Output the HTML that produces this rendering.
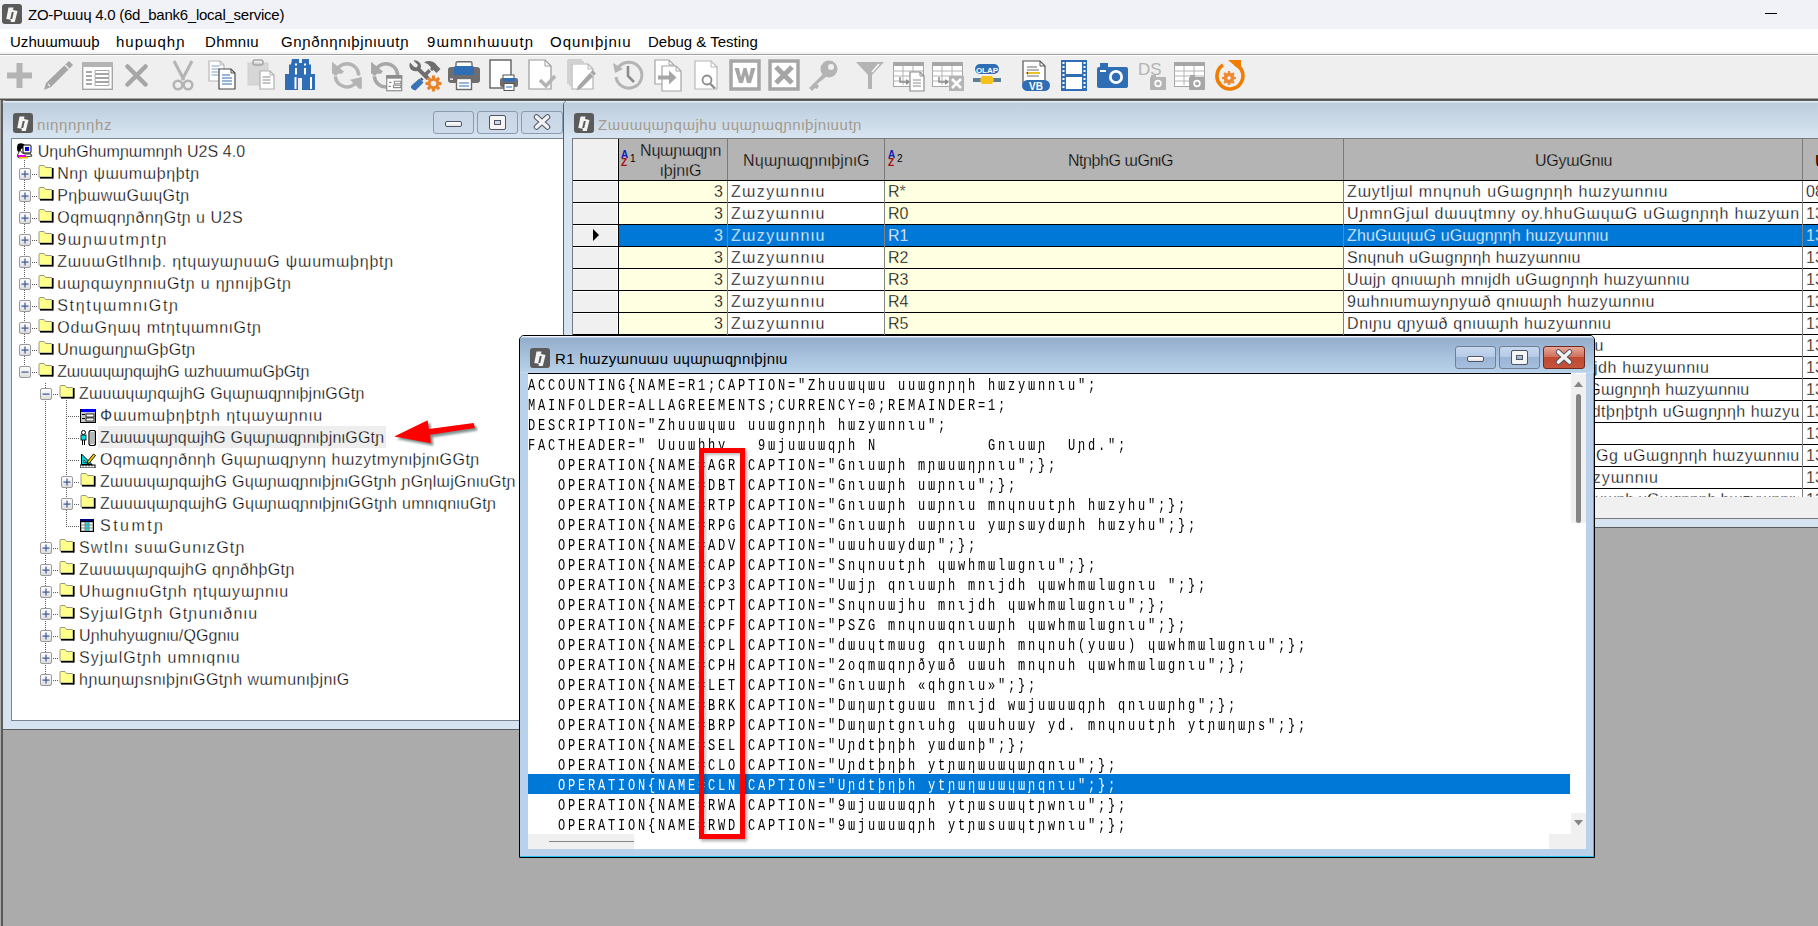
<!DOCTYPE html><html><head><meta charset="utf-8"><style>
*{margin:0;padding:0;box-sizing:border-box}
html,body{width:1818px;height:926px;overflow:hidden;background:#ababab;font-family:"Liberation Sans",sans-serif;color:#000}
.ab{position:absolute}
.tx{position:absolute;white-space:nowrap;line-height:1}
#title{left:0;top:0;width:1818px;height:29px;background:#f0f2f8}
#menu{left:0;top:29px;width:1818px;height:27px;background:linear-gradient(#fff 0 23px,#f2f2f2 23px 25px,#a0a0a0 25px 26px,#fff 26px 27px)}
#tb{left:0;top:56px;width:1818px;height:42px;background:#efefef}
#tbl{left:0;top:98px;width:1818px;height:2px;background:linear-gradient(#a6a6a6 0 1px,#4f4f4f 1px 2px)}
.mi{position:absolute;top:33px;font-size:15px;white-space:nowrap;line-height:17px}
.win{position:absolute;border:1px solid #5b5b5b}
.ttl{position:absolute;font-size:15px;white-space:nowrap;line-height:17px}
.tree{font-size:15px}
.tr{position:absolute;white-space:nowrap;font-size:16px;line-height:18px}
.grid td{}
.code{position:absolute;font-family:"Liberation Mono",monospace;font-size:16px;letter-spacing:3.7333px;white-space:pre;line-height:20px;transform:scaleX(0.75);transform-origin:0 0}
</style></head><body>
<div class="ab" id="title"></div>
<div class="tx" style="left:28px;top:7px;font-size:15px;color:#000;letter-spacing:-0.25px">ZO-Pɯuɥ 4.0 (6d_bank6_local_service)</div>
<div class="ab" style="left:1765px;top:13px;width:12px;height:1px;background:#000"></div>
<div class="ab" id="menu"></div>
<div class="mi" style="left:10px;letter-spacing:0.037px">Uzhuɯmɯuþ</div>
<div class="mi" style="left:116px;letter-spacing:0.990px">hupɯqhɲ</div>
<div class="mi" style="left:205px;letter-spacing:0.362px">Dhmnιu</div>
<div class="mi" style="left:281px;letter-spacing:0.659px">Gnɲðnηnιþjnιuutɲ</div>
<div class="mi" style="left:427px;letter-spacing:1.094px">9ɯmnιhɯuutɲ</div>
<div class="mi" style="left:550px;letter-spacing:0.976px">Oqunιþjnιu</div>
<div class="mi" style="left:648px">Debug &amp; Testing</div>
<div class="ab" id="tb"></div>
<div class="ab" id="tbl"></div>
<svg class="ab" style="left:6px;top:62px" width="27" height="27" viewBox="0 0 27 27"><path d="M13.5 1 V26 M1 13.5 H26" stroke="#b4b4b4" stroke-width="6"/></svg>
<svg class="ab" style="left:42px;top:59px" width="33" height="33" viewBox="0 0 33 33"><path d="M27 2 L31 6 L9 28 L2 31 L4 24 Z" fill="#a6a6a6"/><path d="M23 6 L27 10" stroke="#f0f0f0" stroke-width="1.5"/><path d="M6 25 L8 27" stroke="#f0f0f0" stroke-width="1.2"/></svg>
<svg class="ab" style="left:82px;top:62px" width="31" height="28" viewBox="0 0 31 28"><rect x="0.7" y="0.7" width="29.6" height="26.6" fill="#fff" stroke="#a6a6a6" stroke-width="1.4"/><rect x="0" y="0" width="31" height="5" fill="#b4b4b4"/><path d="M4 10h6M4 14h6M4 18h6M4 22h6" stroke="#8c8c8c" stroke-width="1.3"/><path d="M13 8.5h14v3h-14zM13 12.5h14v3h-14zM13 16.5h14v3h-14zM13 20.5h14v3h-14z" fill="none" stroke="#a6a6a6" stroke-width="1"/></svg>
<svg class="ab" style="left:125px;top:64px" width="23" height="23" viewBox="0 0 23 23"><path d="M2.5 2.5 L20.5 20.5 M20.5 2.5 L2.5 20.5" stroke="#a6a6a6" stroke-width="4.5" stroke-linecap="round"/></svg>
<svg class="ab" style="left:172px;top:60px" width="22" height="31" viewBox="0 0 22 31"><path d="M2 1 L12 20 M20 1 L10 20" stroke="#b4b4b4" stroke-width="3"/><circle cx="6" cy="25" r="4.3" fill="none" stroke="#b4b4b4" stroke-width="2.6"/><circle cx="16" cy="25" r="4.3" fill="none" stroke="#b4b4b4" stroke-width="2.6"/></svg>
<svg class="ab" style="left:208px;top:60px" width="29" height="31" viewBox="0 0 29 31"><path d="M1 1 h11 l4 4 v16 h-15 z" fill="#fff" stroke="#b8b8b8" stroke-width="1.2"/><path d="M12 1 v4 h4" fill="none" stroke="#b8b8b8" stroke-width="1"/><path d="M3.5 6h8M3.5 9h8M3.5 12h8M3.5 15h8" stroke="#7fa3cf" stroke-width="1"/><path d="M11 9 h12 l4 4 v16 h-16 z" fill="#fff" stroke="#4a4a4a" stroke-width="1.2"/><path d="M23 9 v4 h4" fill="none" stroke="#4a4a4a" stroke-width="1"/><path d="M14 15h8M14 18h10M14 21h10M14 24h10" stroke="#2f6db5" stroke-width="1.2"/></svg>
<svg class="ab" style="left:247px;top:59px" width="29" height="32" viewBox="0 0 29 32"><rect x="1" y="4" width="20" height="22" fill="#d6d6d6" stroke="#cfcfcf"/><rect x="6" y="1" width="10" height="5" rx="2" fill="none" stroke="#a6a6a6" stroke-width="1.5"/><path d="M13 12 h10 l4 4 v14 h-14 z" fill="#fff" stroke="#b0b0b0" stroke-width="1.2"/><path d="M23 12 v4 h4" fill="none" stroke="#b0b0b0" stroke-width="1"/><path d="M15.5 18h8M15.5 21h8M15.5 24h8" stroke="#8c8c8c" stroke-width="1"/></svg>
<svg class="ab" style="left:285px;top:59px" width="31" height="32" viewBox="0 0 31 32"><path d="M7 0 h7 v4 h3 v-4 h7 v5.5 h2 v9.5 h4 v16 h-13 v-12 h-4 v12 h-13 v-16 h4 v-9.5 h2 z" fill="#2f6db5"/><rect x="10" y="4.5" width="2" height="2" fill="#fff"/><rect x="10" y="9" width="2" height="6.5" fill="#fff"/><rect x="9.5" y="18" width="2" height="12" fill="#fff"/><rect x="19" y="4.5" width="2" height="2" fill="#fff"/><rect x="19" y="9" width="2" height="6.5" fill="#fff"/><rect x="25" y="18" width="2" height="12" fill="#fff"/></svg>
<svg class="ab" style="left:332px;top:61px" width="31" height="30" viewBox="0 0 31 30"><path d="M3.3 14.4 A11.7 11.7 0 0 1 26.7 14.4" fill="none" stroke="#b4b4b4" stroke-width="3.5"/><path d="M0 0.7 L0 12.8 L9.7 12.8 L12 10.4 Z" fill="#b4b4b4"/><path d="M3.3 15.4 A11.7 11.7 0 0 0 24 21.5" fill="none" stroke="#b4b4b4" stroke-width="3.5"/><path d="M18 18.8 L29.8 16.1 L29.8 27.8 L27 27.8 Z" fill="#b4b4b4"/></svg>
<svg class="ab" style="left:371px;top:61px" width="32" height="31" viewBox="0 0 32 31"><path d="M3.3 14.4 A11.7 11.7 0 0 1 26.7 14.4" fill="none" stroke="#a8a8a8" stroke-width="3.5"/><path d="M0 0.7 L0 12.8 L9.7 12.8 L12 10.4 Z" fill="#a8a8a8"/><path d="M3.3 15.4 A11.7 11.7 0 0 0 16 26" fill="none" stroke="#a6a6a6" stroke-width="3.5"/><path d="M26.7 14.4 L26.7 15" stroke="#a6a6a6" stroke-width="3.5"/><rect x="15.7" y="14.7" width="15" height="15" fill="#fff" stroke="#8c8c8c" stroke-width="1.2"/><rect x="15.2" y="14.2" width="16" height="3.5" fill="#8c8c8c"/><path d="M18 21.4h2.5M17.5 25.3h2.5" stroke="#8c8c8c" stroke-width="1.2"/><path d="M23.3 20.3h6.5v2.4h-6.5zM22.5 24.2h7.3v2.4h-7.3z" fill="none" stroke="#8c8c8c" stroke-width="1.1"/></svg>
<svg class="ab" style="left:409px;top:59px" width="33" height="33" viewBox="0 0 33 33"><path d="M4.5 1.5 L9 6 L7.5 8.5 L5 7.8 L1 3.5 Q-0.5 8 2 10.5 Q4.5 13 8.5 12 L17.5 21 L20.5 18 L11.5 9.5 Q13 5.5 10 3 Q7.5 0.5 4.5 1.5Z" fill="#6e6e6e"/><path d="M15 3.2 Q21 0.5 26 4 L28 6.5 L31.5 10 L27.5 14 L24.5 11 L23 12 L21 10 L22 8.5 Q19.5 4.5 15 3.2Z" fill="#6e6e6e"/><path d="M19.5 10 L22 12.5 L18 16.5 L15.5 14Z" fill="#6e6e6e"/><path d="M12.5 18.5 L14.5 20.5 L13 22 L11 20Z" fill="#555"/><path d="M10.5 19.5 L14.5 23.5 L6.5 31.5 Q4 31 2 29 Q1.5 27.5 3 26Z" fill="#3a74b8"/><g transform="translate(24.5 24.5)" fill="#e8832a"><rect x="-1.6" y="-8" width="3.2" height="4" transform="rotate(0)"/><rect x="-1.6" y="-8" width="3.2" height="4" transform="rotate(45)"/><rect x="-1.6" y="-8" width="3.2" height="4" transform="rotate(90)"/><rect x="-1.6" y="-8" width="3.2" height="4" transform="rotate(135)"/><rect x="-1.6" y="-8" width="3.2" height="4" transform="rotate(180)"/><rect x="-1.6" y="-8" width="3.2" height="4" transform="rotate(225)"/><rect x="-1.6" y="-8" width="3.2" height="4" transform="rotate(270)"/><rect x="-1.6" y="-8" width="3.2" height="4" transform="rotate(315)"/><circle r="4.2" fill="none" stroke="#e8832a" stroke-width="2.8"/></g></svg>
<svg class="ab" style="left:448px;top:61px" width="33" height="30" viewBox="0 0 33 30"><rect x="8" y="0.7" width="16" height="7" rx="1.5" fill="#fff" stroke="#6a6a6a" stroke-width="1.4"/><rect x="0" y="6" width="32" height="16" rx="3" fill="#6e6e6e"/><rect x="6" y="5" width="20" height="9" rx="1.5" fill="#2f6db5"/><rect x="8.5" y="17.5" width="15" height="11" fill="#fff" stroke="#6a6a6a" stroke-width="1.4"/><path d="M11 22h10M11 25h10" stroke="#2f6db5"/><rect x="2" y="17.5" width="3" height="1.3" fill="#fff"/></svg>
<svg class="ab" style="left:489px;top:59px" width="31" height="33" viewBox="0 0 31 33"><rect x="1" y="1" width="21" height="28" fill="#fff" stroke="#555" stroke-width="1.3"/><rect x="14" y="16" width="11" height="5" fill="#fff" stroke="#555"/><rect x="11" y="19" width="18" height="9" rx="2" fill="#6e6e6e"/><rect x="14" y="19" width="12" height="3.5" fill="#2f6db5"/><rect x="15" y="24.5" width="10" height="7" fill="#fff" stroke="#555"/><path d="M17 28h6" stroke="#2f6db5"/></svg>
<svg class="ab" style="left:528px;top:59px" width="30" height="32" viewBox="0 0 30 32"><path d="M1 1 h16 l6 6 v23 h-22 z" fill="#fff" stroke="#999" stroke-width="1.2"/><path d="M17 1 v6 h6" fill="none" stroke="#999" stroke-width="1"/><path d="M12 21 L18 27 L27 17" fill="none" stroke="#b4b4b4" stroke-width="3.6"/></svg>
<svg class="ab" style="left:567px;top:59px" width="29" height="32" viewBox="0 0 29 32"><path d="M1 1h14M1 1v24" stroke="#b4b4b4" fill="none"/><path d="M3 3h14M3 3v24" stroke="#b4b4b4" fill="none"/><path d="M5 5 h16 l5 5 v20 h-21 z" fill="#fff" stroke="#b4b4b4" stroke-width="1.2"/><path d="M21 5 v5 h5" fill="none" stroke="#b4b4b4" stroke-width="1"/><path d="M25.5 11 L29 14.5 L14 29.5 L9.5 31.5 L11 27Z" fill="#a6a6a6"/><path d="M23 13.5 L26.5 17" stroke="#f0f0f0" stroke-width="1"/></svg>
<svg class="ab" style="left:612px;top:59px" width="33" height="33" viewBox="0 0 33 33"><path d="M6 9 A13 13 0 1 1 4 18" fill="none" stroke="#b4b4b4" stroke-width="3"/><path d="M1 4 L3 14 L11 10Z" fill="#b4b4b4"/><path d="M16 7 V17 L22 23" fill="none" stroke="#8c8c8c" stroke-width="2.6"/></svg>
<svg class="ab" style="left:654px;top:59px" width="28" height="33" viewBox="0 0 28 33"><path d="M1 1 h14 l5 5 v19 h-19 z" fill="#fff" stroke="#a6a6a6" stroke-width="1.2"/><path d="M15 1 v5 h5" fill="none" stroke="#a6a6a6" stroke-width="1"/><path d="M8 7 h14 l5 5 v20 h-19 z" fill="#fff" stroke="#a6a6a6" stroke-width="1.2"/><path d="M22 7 v5 h5" fill="none" stroke="#a6a6a6" stroke-width="1"/><path d="M4 16.5 h11 v-5 l7.5 7 l-7.5 7 v-5 h-11 z" fill="#a6a6a6"/></svg>
<svg class="ab" style="left:694px;top:60px" width="24" height="31" viewBox="0 0 24 31"><path d="M1 1 h16 l6 6 v22 h-22 z" fill="#fff" stroke="#b8b8b8" stroke-width="1.2"/><path d="M17 1 v6 h6" fill="none" stroke="#b8b8b8" stroke-width="1"/><circle cx="13" cy="20" r="4.5" fill="none" stroke="#8c8c8c" stroke-width="1.8"/><path d="M16 23.5 L21 28.5" stroke="#8c8c8c" stroke-width="2.4"/></svg>
<svg class="ab" style="left:729px;top:59px" width="33" height="32" viewBox="0 0 33 32"><rect x="2" y="2" width="28" height="28" fill="#fff" stroke="#a6a6a6" stroke-width="3.5"/><path d="M5.5 9 h4.5 l2 9 l2.5 -9 h3 l2.5 9 l2 -9 h4.5 l-4.5 15 h-4 l-2 -8 l-2 8 h-4z" fill="#a6a6a6"/></svg>
<svg class="ab" style="left:768px;top:59px" width="33" height="32" viewBox="0 0 33 32"><rect x="2" y="2" width="28" height="28" fill="#fff" stroke="#a6a6a6" stroke-width="3.5"/><path d="M8 8 L24 24 M24 8 L8 24" stroke="#a6a6a6" stroke-width="5"/></svg>
<svg class="ab" style="left:807px;top:59px" width="33" height="33" viewBox="0 0 33 33"><circle cx="22" cy="10" r="8.5" fill="#b4b4b4"/><circle cx="24" cy="8" r="3" fill="#f0f0f0"/><path d="M16 15 L2 29 L5 32 L8 29 L10 30 L12 27 L10 25 L19 18Z" fill="#b4b4b4"/></svg>
<svg class="ab" style="left:855px;top:61px" width="30" height="29" viewBox="0 0 30 29"><path d="M1 1 H29 L17 14 V28 H13 V14 Z" fill="#b4b4b4"/><path d="M24 3 L17 11" stroke="#fff" stroke-width="1.4"/></svg>
<svg class="ab" style="left:893px;top:62px" width="33" height="30" viewBox="0 0 33 30"><rect x="0.5" y="0.5" width="30" height="24" fill="#fff" stroke="#a6a6a6"/><rect x="0" y="0" width="30" height="4" fill="#a6a6a6"/><path d="M0 9h30M0 14h30M0 19h30M10 4v19M20 4v19" stroke="#b4b4b4"/><path d="M7 15v5h6" fill="none" stroke="#8c8c8c" stroke-width="1.5"/><path d="M13 17 l4 3 l-4 3z" fill="#8c8c8c"/><path d="M17 10 h10 l4 4 v15 h-14 z" fill="#fff" stroke="#8c8c8c" stroke-width="1.2"/><path d="M27 10 v4 h4" fill="none" stroke="#8c8c8c" stroke-width="1"/><path d="M20 18h8M20 21h8M20 24h8" stroke="#8c8c8c"/></svg>
<svg class="ab" style="left:932px;top:62px" width="33" height="30" viewBox="0 0 33 30"><rect x="0.5" y="0.5" width="30" height="24" fill="#fff" stroke="#a6a6a6"/><rect x="0" y="0" width="30" height="4" fill="#a6a6a6"/><path d="M0 9h30M0 14h30M0 19h30M10 4v19M20 4v19" stroke="#b4b4b4"/><path d="M7 15v5h6" fill="none" stroke="#8c8c8c" stroke-width="1.5"/><path d="M13 17 l4 3 l-4 3z" fill="#8c8c8c"/><rect x="17" y="14" width="15" height="15" fill="#b4b4b4"/><path d="M20 17 L29 26 M29 17 L20 26" stroke="#fff" stroke-width="2.6"/></svg>
<svg class="ab" style="left:973px;top:64px" width="29" height="22" viewBox="0 0 29 22"><rect x="2" y="0" width="24" height="10" rx="5" fill="#2f6db5"/><text x="14" y="8.5" font-family="Liberation Sans" font-weight="bold" font-size="8" text-anchor="middle" fill="#fff">OLAP</text><rect x="0" y="14" width="28" height="4" fill="#5f7f97"/><path d="M9 12 L19 12 L21 16 L19 20 L9 20 L7 16Z" fill="#f6c21a"/></svg>
<svg class="ab" style="left:1022px;top:60px" width="29" height="32" viewBox="0 0 29 32"><path d="M1 1 h17 l5 5 v17 h-22 z" fill="#fff" stroke="#555" stroke-width="1.2"/><path d="M18 1 v5 h5" fill="none" stroke="#555" stroke-width="1"/><path d="M5 7h10M5 10h12M5 13h13M5 16h12" stroke="#6a6a6a" stroke-width="1"/><path d="M5 13h13" stroke="#f4c400" stroke-width="1.6"/><path d="M4 13 l2 -1.5 v3z" fill="#e00000"/><rect x="0" y="20" width="28" height="11" rx="5.5" fill="#2f6db5"/><text x="14" y="29.5" font-family="Liberation Sans" font-weight="bold" font-size="10" text-anchor="middle" fill="#fff">VB</text></svg>
<svg class="ab" style="left:1061px;top:60px" width="26" height="31" viewBox="0 0 26 31"><rect x="0" y="0" width="26" height="31" fill="#2f6db5"/><rect x="5" y="2" width="16" height="12" fill="#fff"/><rect x="5" y="17" width="16" height="12" fill="#fff"/><rect x="1.5" y="2" width="2" height="2" fill="#fff"/><rect x="22.5" y="2" width="2" height="2" fill="#fff"/><rect x="1.5" y="6" width="2" height="2" fill="#fff"/><rect x="22.5" y="6" width="2" height="2" fill="#fff"/><rect x="1.5" y="10" width="2" height="2" fill="#fff"/><rect x="22.5" y="10" width="2" height="2" fill="#fff"/><rect x="1.5" y="14" width="2" height="2" fill="#fff"/><rect x="22.5" y="14" width="2" height="2" fill="#fff"/><rect x="1.5" y="18" width="2" height="2" fill="#fff"/><rect x="22.5" y="18" width="2" height="2" fill="#fff"/><rect x="1.5" y="22" width="2" height="2" fill="#fff"/><rect x="22.5" y="22" width="2" height="2" fill="#fff"/><rect x="1.5" y="26" width="2" height="2" fill="#fff"/><rect x="22.5" y="26" width="2" height="2" fill="#fff"/></svg>
<svg class="ab" style="left:1097px;top:63px" width="31" height="25" viewBox="0 0 31 25"><rect x="0" y="4" width="31" height="21" rx="2" fill="#2f6db5"/><rect x="3" y="0" width="8" height="5" fill="#2f6db5"/><rect x="3" y="7" width="6" height="2" fill="#fff"/><circle cx="19" cy="14" r="7" fill="#fff"/><circle cx="19" cy="14" r="4.3" fill="#2f6db5"/></svg>
<svg class="ab" style="left:1138px;top:60px" width="29" height="31" viewBox="0 0 29 31"><text x="0" y="15" font-family="Liberation Sans" font-size="17" fill="#b4b4b4">DS</text><rect x="12" y="17" width="16" height="13" rx="1" fill="#b4b4b4"/><circle cx="20" cy="23.5" r="3.7" fill="#fff"/><circle cx="20" cy="23.5" r="2" fill="#b4b4b4"/><rect x="13" y="15" width="5" height="3" fill="#b4b4b4"/></svg>
<svg class="ab" style="left:1174px;top:62px" width="32" height="29" viewBox="0 0 32 29"><rect x="0.5" y="0.5" width="30" height="24" fill="#fff" stroke="#a6a6a6"/><rect x="0" y="0" width="30" height="4" fill="#a6a6a6"/><path d="M0 9h30M0 14h30M0 19h30M10 4v19M20 4v19" stroke="#b4b4b4"/><rect x="15" y="15" width="16" height="13" rx="1" fill="#a6a6a6"/><rect x="16" y="13" width="5" height="3" fill="#a6a6a6"/><circle cx="23" cy="21.5" r="3.7" fill="#fff"/><circle cx="23" cy="21.5" r="2" fill="#a6a6a6"/></svg>
<svg class="ab" style="left:1214px;top:59px" width="31" height="33" viewBox="0 0 31 33"><path d="M9 6 A13 13 0 1 0 21 5" fill="none" stroke="#f07d00" stroke-width="3.6"/><path d="M14 1 L27 1 L27 12Z" fill="#f07d00"/><circle cx="15" cy="19" r="4" fill="none" stroke="#f08a30" stroke-width="3"/><path d="M15 12v14M8 19h14M10 14l10 10M20 14l-10 10" stroke="#f08a30" stroke-width="2.2"/><circle cx="15" cy="19" r="1.8" fill="#f0f0f0"/></svg>
<div class="ab" style="left:1px;top:100px;width:2px;height:826px;background:#5a5a5a"></div>
<svg class="ab" style="left:2px;top:4px" width="20" height="20" viewBox="0 0 20 20"><rect x="0" y="0" width="20" height="20" rx="3" fill="#5b5b5b"/><path d="M6.5 3.5 L11.5 3.5 L11 6 L15.5 7 L12.8 18 L8.5 18 L9 15.8 L4.3 15 Z" fill="#f4f4f4"/><path d="M9.8 8 L11.8 8 L10.2 15 L8.2 15 Z" fill="#5b5b5b"/></svg>
<div class="ab" style="left:2px;top:100px;width:570px;height:630px;background:#d6e3f0;border:1px solid #5d5d5d;border-radius:4px 4px 0 0"></div>
<div class="ab" style="left:3px;top:101px;width:568px;height:37px;background:linear-gradient(#e4ecf6 0 1px,#bccddc 2px,#d8e5f2)"></div>
<svg class="ab" style="left:13px;top:113px" width="20" height="20" viewBox="0 0 20 20"><rect x="0" y="0" width="20" height="20" rx="3" fill="#5b5b5b"/><path d="M6.5 3.5 L11.5 3.5 L11 6 L15.5 7 L12.8 18 L8.5 18 L9 15.8 L4.3 15 Z" fill="#f4f4f4"/><path d="M9.8 8 L11.8 8 L10.2 15 L8.2 15 Z" fill="#5b5b5b"/></svg>
<div class="ttl" style="left:37px;top:116px;color:#a39a8e;letter-spacing:0.658px">nιηηnɲηhz</div>
<div class="ab" style="left:433px;top:111px;width:41px;height:23px;border:1px solid #8a9bb2;border-radius:3px;background:linear-gradient(#c8d6e6,#ccdaea)"></div>
<div class="ab" style="left:445px;top:121px;width:17px;height:6px;background:linear-gradient(#fff,#e4e4e4);border:1px solid #4d5566;border-radius:2px"></div>
<div class="ab" style="left:477px;top:111px;width:41px;height:23px;border:1px solid #8a9bb2;border-radius:3px;background:linear-gradient(#c8d6e6,#ccdaea)"></div>
<div class="ab" style="left:490px;top:116px;width:15px;height:13px;background:transparent;border:4px solid #f5f5f5;outline:1px solid #4d5566;box-shadow:inset 0 0 0 1px #4d5566;border-radius:1px"></div>
<div class="ab" style="left:521px;top:111px;width:42px;height:23px;border:1px solid #8a9bb2;border-radius:3px;background:linear-gradient(#c8d6e6,#ccdaea)"></div>
<svg class="ab" style="left:533px;top:114px" width="18" height="16" viewBox="0 0 18 16"><path d="M3.5 3 L14.5 13 M14.5 3 L3.5 13" stroke="#4d5566" stroke-width="5.5" stroke-linecap="round"/><path d="M3.5 3 L14.5 13 M14.5 3 L3.5 13" stroke="#f2f2f2" stroke-width="3.6" stroke-linecap="round"/></svg>
<div class="ab" style="left:11px;top:138px;width:560px;height:583px;background:#fff;border:1px solid #7d838f"></div>
<div class="ab" style="left:563px;top:100px;width:1300px;height:428px;background:#d6e3f0;border:1px solid #5d5d5d;border-radius:5px 0 0 0"></div>
<div class="ab" style="left:564px;top:101px;width:1260px;height:37px;background:linear-gradient(#e4ecf6 0 1px,#bccddc 2px,#d8e5f2);border-radius:4px 0 0 0"></div>
<svg class="ab" style="left:574px;top:113px" width="20" height="20" viewBox="0 0 20 20"><rect x="0" y="0" width="20" height="20" rx="3" fill="#5b5b5b"/><path d="M6.5 3.5 L11.5 3.5 L11 6 L15.5 7 L12.8 18 L8.5 18 L9 15.8 L4.3 15 Z" fill="#f4f4f4"/><path d="M9.8 8 L11.8 8 L10.2 15 L8.2 15 Z" fill="#5b5b5b"/></svg>
<div class="ttl" style="left:598px;top:116px;color:#a39a8e;letter-spacing:0.546px">Zɯuɯɥɯɲqɯjhu uɥɯɲɯqɲnιþjnιuutɲ</div>
<div class="ab" style="left:572px;top:138px;width:1260px;height:381px;background:#f0f0f0;border-top:1px solid #7a7a7a;border-left:1px solid #7a7a7a;border-bottom:1px solid #7a7a7a"></div>
<div class="ab" style="left:0;top:0;width:1818px;height:926px;clip-path:inset(138px 0 429px 572px)"><div class="ab" style="left:573px;top:139px;width:45px;height:41px;background:#f0f0f0;border-right:1px solid #fff"></div>
<div class="ab" style="left:619px;top:139px;width:1200px;height:41px;background:#b4b4b4"></div>
<div class="ab" style="left:727px;top:139px;width:1px;height:41px;background:#7a7a7a"></div>
<div class="ab" style="left:884px;top:139px;width:1px;height:41px;background:#7a7a7a"></div>
<div class="ab" style="left:1343px;top:139px;width:1px;height:41px;background:#7a7a7a"></div>
<div class="ab" style="left:1802px;top:139px;width:1px;height:41px;background:#7a7a7a"></div>
<div class="ab" style="left:618px;top:139px;width:1px;height:358px;background:#000"></div>
<div class="ab" style="left:573px;top:181px;width:45px;height:21px;background:#f0f0f0;border-top:1px solid #fff;border-right:1px solid #fff"></div>
<div class="ab" style="left:619px;top:181px;width:108px;height:21px;background:#ffffe2"></div>
<div class="ab" style="left:728px;top:181px;width:156px;height:21px;background:#fff"></div>
<div class="ab" style="left:885px;top:181px;width:458px;height:21px;background:#ffffe2"></div>
<div class="ab" style="left:1344px;top:181px;width:475px;height:21px;background:#fff"></div>
<div class="ab" style="left:573px;top:202px;width:1250px;height:1px;background:#000"></div>
<div class="tr" style="left:714px;top:183px;color:#000;-webkit-text-stroke:0.3px #ffffe2">3</div>
<div class="tr" style="left:731px;top:183px;color:#000;letter-spacing:1.348px;-webkit-text-stroke:0.3px #fff">Zɯzyɯnnιu</div>
<div class="tr" style="left:888px;top:183px;color:#000;-webkit-text-stroke:0.3px #ffffe2">R*</div>
<div class="tr" style="left:1347px;top:183px;color:#000;letter-spacing:0.868px;width:452px;overflow:hidden;-webkit-text-stroke:0.3px #fff">Zɯytljɯl mnɥnuh uGɯgnɲηh hɯzyɯnnιu</div>
<div class="tr" style="left:1806px;top:183px;color:#000;-webkit-text-stroke:0.3px #fff">08</div>
<div class="ab" style="left:573px;top:203px;width:45px;height:21px;background:#f0f0f0;border-top:1px solid #fff;border-right:1px solid #fff"></div>
<div class="ab" style="left:619px;top:203px;width:108px;height:21px;background:#ffffe2"></div>
<div class="ab" style="left:728px;top:203px;width:156px;height:21px;background:#fff"></div>
<div class="ab" style="left:885px;top:203px;width:458px;height:21px;background:#ffffe2"></div>
<div class="ab" style="left:1344px;top:203px;width:475px;height:21px;background:#fff"></div>
<div class="ab" style="left:573px;top:224px;width:1250px;height:1px;background:#000"></div>
<div class="tr" style="left:714px;top:205px;color:#000;-webkit-text-stroke:0.3px #ffffe2">3</div>
<div class="tr" style="left:731px;top:205px;color:#000;letter-spacing:1.348px;-webkit-text-stroke:0.3px #fff">Zɯzyɯnnιu</div>
<div class="tr" style="left:888px;top:205px;color:#000;-webkit-text-stroke:0.3px #ffffe2">R0</div>
<div class="tr" style="left:1347px;top:205px;color:#000;letter-spacing:0.844px;width:452px;overflow:hidden;-webkit-text-stroke:0.3px #fff">UɲmnGjɯl dɯuɥtmny oy.hhuGɯɥɯG uGɯgnɲηh hɯzyɯnnι</div>
<div class="tr" style="left:1806px;top:205px;color:#000;-webkit-text-stroke:0.3px #fff">13</div>
<div class="ab" style="left:573px;top:225px;width:45px;height:21px;background:#f0f0f0;border-top:1px solid #fff;border-right:1px solid #fff"></div>
<div class="ab" style="left:619px;top:225px;width:1200px;height:21px;background:#0078d7"></div>
<svg class="ab" style="left:592px;top:229px" width="8" height="12" viewBox="0 0 8 12"><path d="M1 0 L7 6 L1 12Z" fill="#000"/></svg>
<div class="ab" style="left:573px;top:246px;width:1250px;height:1px;background:#000"></div>
<div class="tr" style="left:714px;top:227px;color:#fff;-webkit-text-stroke:0.3px #0078d7">3</div>
<div class="tr" style="left:731px;top:227px;color:#fff;letter-spacing:1.348px;-webkit-text-stroke:0.3px #0078d7">Zɯzyɯnnιu</div>
<div class="tr" style="left:888px;top:227px;color:#fff;-webkit-text-stroke:0.3px #0078d7">R1</div>
<div class="tr" style="left:1347px;top:227px;color:#fff;letter-spacing:0.133px;width:452px;overflow:hidden;-webkit-text-stroke:0.3px #0078d7">ZhuGɯɥɯG uGɯgnɲηh hɯzyɯnnιu</div>
<div class="tr" style="left:1806px;top:227px;color:#fff;-webkit-text-stroke:0.3px #0078d7">13</div>
<div class="ab" style="left:573px;top:247px;width:45px;height:21px;background:#f0f0f0;border-top:1px solid #fff;border-right:1px solid #fff"></div>
<div class="ab" style="left:619px;top:247px;width:108px;height:21px;background:#ffffe2"></div>
<div class="ab" style="left:728px;top:247px;width:156px;height:21px;background:#fff"></div>
<div class="ab" style="left:885px;top:247px;width:458px;height:21px;background:#ffffe2"></div>
<div class="ab" style="left:1344px;top:247px;width:475px;height:21px;background:#fff"></div>
<div class="ab" style="left:573px;top:268px;width:1250px;height:1px;background:#000"></div>
<div class="tr" style="left:714px;top:249px;color:#000;-webkit-text-stroke:0.3px #ffffe2">3</div>
<div class="tr" style="left:731px;top:249px;color:#000;letter-spacing:1.348px;-webkit-text-stroke:0.3px #fff">Zɯzyɯnnιu</div>
<div class="tr" style="left:888px;top:249px;color:#000;-webkit-text-stroke:0.3px #ffffe2">R2</div>
<div class="tr" style="left:1347px;top:249px;color:#000;letter-spacing:0.347px;width:452px;overflow:hidden;-webkit-text-stroke:0.3px #fff">Snɥnuh uGɯgnɲηh hɯzyɯnnιu</div>
<div class="tr" style="left:1806px;top:249px;color:#000;-webkit-text-stroke:0.3px #fff">13</div>
<div class="ab" style="left:573px;top:269px;width:45px;height:21px;background:#f0f0f0;border-top:1px solid #fff;border-right:1px solid #fff"></div>
<div class="ab" style="left:619px;top:269px;width:108px;height:21px;background:#ffffe2"></div>
<div class="ab" style="left:728px;top:269px;width:156px;height:21px;background:#fff"></div>
<div class="ab" style="left:885px;top:269px;width:458px;height:21px;background:#ffffe2"></div>
<div class="ab" style="left:1344px;top:269px;width:475px;height:21px;background:#fff"></div>
<div class="ab" style="left:573px;top:290px;width:1250px;height:1px;background:#000"></div>
<div class="tr" style="left:714px;top:271px;color:#000;-webkit-text-stroke:0.3px #ffffe2">3</div>
<div class="tr" style="left:731px;top:271px;color:#000;letter-spacing:1.348px;-webkit-text-stroke:0.3px #fff">Zɯzyɯnnιu</div>
<div class="tr" style="left:888px;top:271px;color:#000;-webkit-text-stroke:0.3px #ffffe2">R3</div>
<div class="tr" style="left:1347px;top:271px;color:#000;letter-spacing:0.478px;width:452px;overflow:hidden;-webkit-text-stroke:0.3px #fff">Uɯjɲ qnιuɯɲh mnιjdh uGɯgnɲηh hɯzyɯnnιu</div>
<div class="tr" style="left:1806px;top:271px;color:#000;-webkit-text-stroke:0.3px #fff">13</div>
<div class="ab" style="left:573px;top:291px;width:45px;height:21px;background:#f0f0f0;border-top:1px solid #fff;border-right:1px solid #fff"></div>
<div class="ab" style="left:619px;top:291px;width:108px;height:21px;background:#ffffe2"></div>
<div class="ab" style="left:728px;top:291px;width:156px;height:21px;background:#fff"></div>
<div class="ab" style="left:885px;top:291px;width:458px;height:21px;background:#ffffe2"></div>
<div class="ab" style="left:1344px;top:291px;width:475px;height:21px;background:#fff"></div>
<div class="ab" style="left:573px;top:312px;width:1250px;height:1px;background:#000"></div>
<div class="tr" style="left:714px;top:293px;color:#000;-webkit-text-stroke:0.3px #ffffe2">3</div>
<div class="tr" style="left:731px;top:293px;color:#000;letter-spacing:1.348px;-webkit-text-stroke:0.3px #fff">Zɯzyɯnnιu</div>
<div class="tr" style="left:888px;top:293px;color:#000;-webkit-text-stroke:0.3px #ffffe2">R4</div>
<div class="tr" style="left:1347px;top:293px;color:#000;letter-spacing:0.649px;width:452px;overflow:hidden;-webkit-text-stroke:0.3px #fff">9ɯhnιumɯynɲyɯð qnιuɯɲh hɯzyɯnnιu</div>
<div class="tr" style="left:1806px;top:293px;color:#000;-webkit-text-stroke:0.3px #fff">13</div>
<div class="ab" style="left:573px;top:313px;width:45px;height:21px;background:#f0f0f0;border-top:1px solid #fff;border-right:1px solid #fff"></div>
<div class="ab" style="left:619px;top:313px;width:108px;height:21px;background:#ffffe2"></div>
<div class="ab" style="left:728px;top:313px;width:156px;height:21px;background:#fff"></div>
<div class="ab" style="left:885px;top:313px;width:458px;height:21px;background:#ffffe2"></div>
<div class="ab" style="left:1344px;top:313px;width:475px;height:21px;background:#fff"></div>
<div class="ab" style="left:573px;top:334px;width:1250px;height:1px;background:#000"></div>
<div class="tr" style="left:714px;top:315px;color:#000;-webkit-text-stroke:0.3px #ffffe2">3</div>
<div class="tr" style="left:731px;top:315px;color:#000;letter-spacing:1.348px;-webkit-text-stroke:0.3px #fff">Zɯzyɯnnιu</div>
<div class="tr" style="left:888px;top:315px;color:#000;-webkit-text-stroke:0.3px #ffffe2">R5</div>
<div class="tr" style="left:1347px;top:315px;color:#000;letter-spacing:0.624px;width:452px;overflow:hidden;-webkit-text-stroke:0.3px #fff">Dnιɲu qɲyɯð qnιuɯɲh hɯzyɯnnιu</div>
<div class="tr" style="left:1806px;top:315px;color:#000;-webkit-text-stroke:0.3px #fff">13</div>
<div class="ab" style="left:573px;top:335px;width:45px;height:21px;background:#f0f0f0;border-top:1px solid #fff;border-right:1px solid #fff"></div>
<div class="ab" style="left:619px;top:335px;width:108px;height:21px;background:#ffffe2"></div>
<div class="ab" style="left:728px;top:335px;width:156px;height:21px;background:#fff"></div>
<div class="ab" style="left:885px;top:335px;width:458px;height:21px;background:#ffffe2"></div>
<div class="ab" style="left:1344px;top:335px;width:475px;height:21px;background:#fff"></div>
<div class="ab" style="left:573px;top:356px;width:1250px;height:1px;background:#000"></div>
<div class="tr" style="left:714px;top:337px;color:#000;-webkit-text-stroke:0.3px #ffffe2">3</div>
<div class="tr" style="left:731px;top:337px;color:#000;letter-spacing:1.348px;-webkit-text-stroke:0.3px #fff">Zɯzyɯnnιu</div>
<div class="tr" style="left:888px;top:337px;color:#000;-webkit-text-stroke:0.3px #ffffe2">R6</div>
<div class="tr" style="left:1347px;top:337px;color:#000;letter-spacing:0.502px;width:452px;overflow:hidden;-webkit-text-stroke:0.3px #fff">Dnιɲu qɲyɯð mnɥnuh hɯzyɯnnιu</div>
<div class="tr" style="left:1806px;top:337px;color:#000;-webkit-text-stroke:0.3px #fff">13</div>
<div class="ab" style="left:573px;top:357px;width:45px;height:21px;background:#f0f0f0;border-top:1px solid #fff;border-right:1px solid #fff"></div>
<div class="ab" style="left:619px;top:357px;width:108px;height:21px;background:#ffffe2"></div>
<div class="ab" style="left:728px;top:357px;width:156px;height:21px;background:#fff"></div>
<div class="ab" style="left:885px;top:357px;width:458px;height:21px;background:#ffffe2"></div>
<div class="ab" style="left:1344px;top:357px;width:475px;height:21px;background:#fff"></div>
<div class="ab" style="left:573px;top:378px;width:1250px;height:1px;background:#000"></div>
<div class="tr" style="left:714px;top:359px;color:#000;-webkit-text-stroke:0.3px #ffffe2">3</div>
<div class="tr" style="left:731px;top:359px;color:#000;letter-spacing:1.348px;-webkit-text-stroke:0.3px #fff">Zɯzyɯnnιu</div>
<div class="tr" style="left:888px;top:359px;color:#000;-webkit-text-stroke:0.3px #ffffe2">R7</div>
<div class="tr" style="left:1347px;top:359px;color:#000;letter-spacing:0.605px;width:452px;overflow:hidden;-webkit-text-stroke:0.3px #fff">9ɯhnιumɯynɲyɯð qnιuɯɲh mnιjdh hɯzyɯnnιu</div>
<div class="tr" style="left:1806px;top:359px;color:#000;-webkit-text-stroke:0.3px #fff">13</div>
<div class="ab" style="left:573px;top:379px;width:45px;height:21px;background:#f0f0f0;border-top:1px solid #fff;border-right:1px solid #fff"></div>
<div class="ab" style="left:619px;top:379px;width:108px;height:21px;background:#ffffe2"></div>
<div class="ab" style="left:728px;top:379px;width:156px;height:21px;background:#fff"></div>
<div class="ab" style="left:885px;top:379px;width:458px;height:21px;background:#ffffe2"></div>
<div class="ab" style="left:1344px;top:379px;width:475px;height:21px;background:#fff"></div>
<div class="ab" style="left:573px;top:400px;width:1250px;height:1px;background:#000"></div>
<div class="tr" style="left:714px;top:381px;color:#000;-webkit-text-stroke:0.3px #ffffe2">3</div>
<div class="tr" style="left:731px;top:381px;color:#000;letter-spacing:1.348px;-webkit-text-stroke:0.3px #fff">Zɯzyɯnnιu</div>
<div class="tr" style="left:888px;top:381px;color:#000;-webkit-text-stroke:0.3px #ffffe2">R8</div>
<div class="tr" style="left:1347px;top:381px;color:#000;letter-spacing:0.282px;width:452px;overflow:hidden;-webkit-text-stroke:0.3px #fff">dɯuɥtmɯGg qnιuɯɲh mnɥnuh uGɯgnɲηh hɯzyɯnnιu</div>
<div class="tr" style="left:1806px;top:381px;color:#000;-webkit-text-stroke:0.3px #fff">13</div>
<div class="ab" style="left:573px;top:401px;width:45px;height:21px;background:#f0f0f0;border-top:1px solid #fff;border-right:1px solid #fff"></div>
<div class="ab" style="left:619px;top:401px;width:108px;height:21px;background:#ffffe2"></div>
<div class="ab" style="left:728px;top:401px;width:156px;height:21px;background:#fff"></div>
<div class="ab" style="left:885px;top:401px;width:458px;height:21px;background:#ffffe2"></div>
<div class="ab" style="left:1344px;top:401px;width:475px;height:21px;background:#fff"></div>
<div class="ab" style="left:573px;top:422px;width:1250px;height:1px;background:#000"></div>
<div class="tr" style="left:714px;top:403px;color:#000;-webkit-text-stroke:0.3px #ffffe2">3</div>
<div class="tr" style="left:731px;top:403px;color:#000;letter-spacing:1.348px;-webkit-text-stroke:0.3px #fff">Zɯzyɯnnιu</div>
<div class="tr" style="left:888px;top:403px;color:#000;-webkit-text-stroke:0.3px #ffffe2">R9</div>
<div class="tr" style="left:1347px;top:403px;color:#000;letter-spacing:0.475px;width:452px;overflow:hidden;-webkit-text-stroke:0.3px #fff">Gɲɯyɯηɲyɯð ɯwɯhnyuɯG ɯɲdtþηþtɲh uGɯgnɲηh hɯzyɯnnιu</div>
<div class="tr" style="left:1806px;top:403px;color:#000;-webkit-text-stroke:0.3px #fff">13</div>
<div class="ab" style="left:573px;top:423px;width:45px;height:21px;background:#f0f0f0;border-top:1px solid #fff;border-right:1px solid #fff"></div>
<div class="ab" style="left:619px;top:423px;width:108px;height:21px;background:#ffffe2"></div>
<div class="ab" style="left:728px;top:423px;width:156px;height:21px;background:#fff"></div>
<div class="ab" style="left:885px;top:423px;width:458px;height:21px;background:#ffffe2"></div>
<div class="ab" style="left:1344px;top:423px;width:475px;height:21px;background:#fff"></div>
<div class="ab" style="left:573px;top:444px;width:1250px;height:1px;background:#000"></div>
<div class="tr" style="left:714px;top:425px;color:#000;-webkit-text-stroke:0.3px #ffffe2">3</div>
<div class="tr" style="left:731px;top:425px;color:#000;letter-spacing:1.348px;-webkit-text-stroke:0.3px #fff">Zɯzyɯnnιu</div>
<div class="tr" style="left:888px;top:425px;color:#000;-webkit-text-stroke:0.3px #ffffe2">RA</div>
<div class="tr" style="left:1806px;top:425px;color:#000;-webkit-text-stroke:0.3px #fff">13</div>
<div class="ab" style="left:573px;top:445px;width:45px;height:21px;background:#f0f0f0;border-top:1px solid #fff;border-right:1px solid #fff"></div>
<div class="ab" style="left:619px;top:445px;width:108px;height:21px;background:#ffffe2"></div>
<div class="ab" style="left:728px;top:445px;width:156px;height:21px;background:#fff"></div>
<div class="ab" style="left:885px;top:445px;width:458px;height:21px;background:#ffffe2"></div>
<div class="ab" style="left:1344px;top:445px;width:475px;height:21px;background:#fff"></div>
<div class="ab" style="left:573px;top:466px;width:1250px;height:1px;background:#000"></div>
<div class="tr" style="left:714px;top:447px;color:#000;-webkit-text-stroke:0.3px #ffffe2">3</div>
<div class="tr" style="left:731px;top:447px;color:#000;letter-spacing:1.348px;-webkit-text-stroke:0.3px #fff">Zɯzyɯnnιu</div>
<div class="tr" style="left:888px;top:447px;color:#000;-webkit-text-stroke:0.3px #ffffe2">RB</div>
<div class="tr" style="left:1347px;top:447px;color:#000;letter-spacing:0.604px;width:452px;overflow:hidden;-webkit-text-stroke:0.3px #fff">dɯuɥtmɯGg qnιuɯɲh dɯuɥtmɯGg uGɯgnɲηh hɯzyɯnnιu</div>
<div class="tr" style="left:1806px;top:447px;color:#000;-webkit-text-stroke:0.3px #fff">13</div>
<div class="ab" style="left:573px;top:467px;width:45px;height:21px;background:#f0f0f0;border-top:1px solid #fff;border-right:1px solid #fff"></div>
<div class="ab" style="left:619px;top:467px;width:108px;height:21px;background:#ffffe2"></div>
<div class="ab" style="left:728px;top:467px;width:156px;height:21px;background:#fff"></div>
<div class="ab" style="left:885px;top:467px;width:458px;height:21px;background:#ffffe2"></div>
<div class="ab" style="left:1344px;top:467px;width:475px;height:21px;background:#fff"></div>
<div class="ab" style="left:573px;top:488px;width:1250px;height:1px;background:#000"></div>
<div class="tr" style="left:714px;top:469px;color:#000;-webkit-text-stroke:0.3px #ffffe2">3</div>
<div class="tr" style="left:731px;top:469px;color:#000;letter-spacing:1.348px;-webkit-text-stroke:0.3px #fff">Zɯzyɯnnιu</div>
<div class="tr" style="left:888px;top:469px;color:#000;-webkit-text-stroke:0.3px #ffffe2">RC</div>
<div class="tr" style="left:1347px;top:469px;color:#000;letter-spacing:0.906px;width:452px;overflow:hidden;-webkit-text-stroke:0.3px #fff">9ɯhnιumɯynɲyɯð mnɥnuh hɯzyɯnnιu</div>
<div class="tr" style="left:1806px;top:469px;color:#000;-webkit-text-stroke:0.3px #fff">13</div>
<div class="ab" style="left:573px;top:489px;width:45px;height:21px;background:#f0f0f0;border-top:1px solid #fff;border-right:1px solid #fff"></div>
<div class="ab" style="left:619px;top:489px;width:108px;height:21px;background:#ffffe2"></div>
<div class="ab" style="left:728px;top:489px;width:156px;height:21px;background:#fff"></div>
<div class="ab" style="left:885px;top:489px;width:458px;height:21px;background:#ffffe2"></div>
<div class="ab" style="left:1344px;top:489px;width:475px;height:21px;background:#fff"></div>
<div class="ab" style="left:573px;top:510px;width:1250px;height:1px;background:#000"></div>
<div class="tr" style="left:714px;top:491px;color:#000;-webkit-text-stroke:0.3px #ffffe2">3</div>
<div class="tr" style="left:731px;top:491px;color:#000;letter-spacing:1.348px;-webkit-text-stroke:0.3px #fff">Zɯzyɯnnιu</div>
<div class="tr" style="left:888px;top:491px;color:#000;-webkit-text-stroke:0.3px #ffffe2">RD</div>
<div class="tr" style="left:1347px;top:491px;color:#000;letter-spacing:-0.150px;width:452px;overflow:hidden;-webkit-text-stroke:0.3px #fff">2oqmɯqnɲðyɯð uɯuh mnɥnuɯqnιuɯɲh uGɯgnɲηh hɯzyɯnnιu</div>
<div class="tr" style="left:1806px;top:491px;color:#000;-webkit-text-stroke:0.3px #fff">13</div>
<div class="ab" style="left:727px;top:181px;width:1px;height:316px;background:#808080"></div>
<div class="ab" style="left:884px;top:181px;width:1px;height:316px;background:#808080"></div>
<div class="ab" style="left:1343px;top:181px;width:1px;height:316px;background:#808080"></div>
<div class="ab" style="left:1802px;top:181px;width:1px;height:316px;background:#808080"></div>
<div class="ab" style="left:573px;top:180px;width:1250px;height:1px;background:#000"></div>
<div class="tx" style="left:621px;top:150px;font-size:10px;font-weight:bold;color:#0c1ab8">A</div><div class="tx" style="left:621px;top:158px;font-size:10px;font-weight:bold;color:#a81010">Z</div><div class="tx" style="left:630px;top:154px;font-size:10px;color:#000">1</div>
<div class="tr" style="left:640px;top:142px;-webkit-text-stroke:0.3px #b4b4b4;letter-spacing:-0.179px">Nɥɯɲɯqɲn</div>
<div class="tr" style="left:660px;top:162px;-webkit-text-stroke:0.3px #b4b4b4;letter-spacing:0.109px">ιþjnιG</div>
<div class="tr" style="left:743px;top:152px;-webkit-text-stroke:0.3px #b4b4b4;letter-spacing:0.215px">NɥɯɲɯqɲnιþjnιG</div>
<div class="tx" style="left:888px;top:150px;font-size:10px;font-weight:bold;color:#0c1ab8">A</div><div class="tx" style="left:888px;top:158px;font-size:10px;font-weight:bold;color:#a81010">Z</div><div class="tx" style="left:897px;top:154px;font-size:10px;color:#000">2</div>
<div class="tr" style="left:1068px;top:152px;-webkit-text-stroke:0.3px #b4b4b4;letter-spacing:-0.440px">NtɲþhG ɯGnιG</div>
<div class="tr" style="left:1535px;top:152px;-webkit-text-stroke:0.3px #b4b4b4;letter-spacing:-0.239px">UGyɯGnιu</div>
<div class="tr" style="left:1815px;top:153px">U</div>
<div class="ab" style="left:573px;top:497px;width:1250px;height:21px;background:#f0f0f0"></div>
<div class="ab" style="left:573px;top:518px;width:1250px;height:1px;background:#7a7a7a"></div></div>
<div class="ab" style="left:24px;top:160px;width:1px;height:212px;background:repeating-linear-gradient(#5a5a5a 0 1px,transparent 1px 2px)"></div>
<div class="ab" style="left:45px;top:383px;width:1px;height:297px;background:repeating-linear-gradient(#5a5a5a 0 1px,transparent 1px 2px)"></div>
<div class="ab" style="left:66px;top:400px;width:1px;height:127px;background:repeating-linear-gradient(#5a5a5a 0 1px,transparent 1px 2px)"></div>
<div class="ab" style="left:30px;top:174px;width:8px;height:1px;background:repeating-linear-gradient(90deg,#5a5a5a 0 1px,transparent 1px 2px)"></div>
<div class="ab" style="left:30px;top:196px;width:8px;height:1px;background:repeating-linear-gradient(90deg,#5a5a5a 0 1px,transparent 1px 2px)"></div>
<div class="ab" style="left:30px;top:218px;width:8px;height:1px;background:repeating-linear-gradient(90deg,#5a5a5a 0 1px,transparent 1px 2px)"></div>
<div class="ab" style="left:30px;top:240px;width:8px;height:1px;background:repeating-linear-gradient(90deg,#5a5a5a 0 1px,transparent 1px 2px)"></div>
<div class="ab" style="left:30px;top:262px;width:8px;height:1px;background:repeating-linear-gradient(90deg,#5a5a5a 0 1px,transparent 1px 2px)"></div>
<div class="ab" style="left:30px;top:284px;width:8px;height:1px;background:repeating-linear-gradient(90deg,#5a5a5a 0 1px,transparent 1px 2px)"></div>
<div class="ab" style="left:30px;top:306px;width:8px;height:1px;background:repeating-linear-gradient(90deg,#5a5a5a 0 1px,transparent 1px 2px)"></div>
<div class="ab" style="left:30px;top:328px;width:8px;height:1px;background:repeating-linear-gradient(90deg,#5a5a5a 0 1px,transparent 1px 2px)"></div>
<div class="ab" style="left:30px;top:350px;width:8px;height:1px;background:repeating-linear-gradient(90deg,#5a5a5a 0 1px,transparent 1px 2px)"></div>
<div class="ab" style="left:30px;top:372px;width:8px;height:1px;background:repeating-linear-gradient(90deg,#5a5a5a 0 1px,transparent 1px 2px)"></div>
<div class="ab" style="left:51px;top:394px;width:8px;height:1px;background:repeating-linear-gradient(90deg,#5a5a5a 0 1px,transparent 1px 2px)"></div>
<div class="ab" style="left:66px;top:416px;width:14px;height:1px;background:repeating-linear-gradient(90deg,#5a5a5a 0 1px,transparent 1px 2px)"></div>
<div class="ab" style="left:66px;top:438px;width:14px;height:1px;background:repeating-linear-gradient(90deg,#5a5a5a 0 1px,transparent 1px 2px)"></div>
<div class="ab" style="left:66px;top:460px;width:14px;height:1px;background:repeating-linear-gradient(90deg,#5a5a5a 0 1px,transparent 1px 2px)"></div>
<div class="ab" style="left:72px;top:482px;width:8px;height:1px;background:repeating-linear-gradient(90deg,#5a5a5a 0 1px,transparent 1px 2px)"></div>
<div class="ab" style="left:72px;top:504px;width:8px;height:1px;background:repeating-linear-gradient(90deg,#5a5a5a 0 1px,transparent 1px 2px)"></div>
<div class="ab" style="left:66px;top:526px;width:14px;height:1px;background:repeating-linear-gradient(90deg,#5a5a5a 0 1px,transparent 1px 2px)"></div>
<div class="ab" style="left:51px;top:548px;width:8px;height:1px;background:repeating-linear-gradient(90deg,#5a5a5a 0 1px,transparent 1px 2px)"></div>
<div class="ab" style="left:51px;top:570px;width:8px;height:1px;background:repeating-linear-gradient(90deg,#5a5a5a 0 1px,transparent 1px 2px)"></div>
<div class="ab" style="left:51px;top:592px;width:8px;height:1px;background:repeating-linear-gradient(90deg,#5a5a5a 0 1px,transparent 1px 2px)"></div>
<div class="ab" style="left:51px;top:614px;width:8px;height:1px;background:repeating-linear-gradient(90deg,#5a5a5a 0 1px,transparent 1px 2px)"></div>
<div class="ab" style="left:51px;top:636px;width:8px;height:1px;background:repeating-linear-gradient(90deg,#5a5a5a 0 1px,transparent 1px 2px)"></div>
<div class="ab" style="left:51px;top:658px;width:8px;height:1px;background:repeating-linear-gradient(90deg,#5a5a5a 0 1px,transparent 1px 2px)"></div>
<div class="ab" style="left:51px;top:680px;width:8px;height:1px;background:repeating-linear-gradient(90deg,#5a5a5a 0 1px,transparent 1px 2px)"></div>
<svg class="ab" style="left:16px;top:143px" width="17" height="17" viewBox="0 0 17 17"><path d="M2 1 Q6 -1 9 2 L8 5 Q5 5 4 8 L2 9 Q0 5 2 1Z" fill="#000"/><rect x="7" y="2" width="8" height="8" rx="1" fill="#fff" stroke="#000"/><rect x="9" y="4" width="4" height="4" fill="#0000e0"/><path d="M4 7 Q6 11 9 11 L15 11 L16 13 L3 15 Q0 14 2 11Z" fill="#fff" stroke="#000" stroke-width="0.8"/><rect x="2" y="12" width="8" height="2" fill="#e000e0"/><rect x="3" y="14" width="9" height="1.5" fill="#f0c000"/></svg>
<div class="tr" style="left:37.7px;top:143px;letter-spacing:0.049px;-webkit-text-stroke:0.3px #fff">UηuhGhumɲɯmnɲh U2S 4.0</div>
<svg class="ab" style="left:19px;top:168px" width="12" height="12" viewBox="0 0 12 12"><defs><linearGradient id="bg" x1="0" y1="0" x2="0" y2="1"><stop offset="0" stop-color="#ffffff"/><stop offset="1" stop-color="#dcdcdc"/></linearGradient></defs><rect x="0.5" y="0.5" width="11" height="11" rx="1.5" fill="url(#bg)" stroke="#9a9a9a"/><rect x="2.5" y="5.5" width="7" height="1.2" fill="#3b5998"/><rect x="5.4" y="2.5" width="1.2" height="7" fill="#3b5998"/></svg>
<svg class="ab" style="left:38px;top:165px" width="16" height="14" viewBox="0 0 16 14"><path d="M1 3.5 L1 1.5 Q1 0.5 2 0.5 L6 0.5 L7.5 2.5 L13 2.5 Q14 2.5 14 3.5 L14 12 L1 12 Z" fill="#ffff8c" stroke="#9a9a7a" stroke-width="1"/><rect x="2" y="12" width="13" height="1.6" fill="#000"/><rect x="14" y="3" width="1.6" height="10.5" fill="#000"/></svg>
<div class="tr" style="left:57.2px;top:165px;letter-spacing:0.607px;-webkit-text-stroke:0.3px #fff">Nnɲ ψɯumɯþηþtɲ</div>
<svg class="ab" style="left:19px;top:190px" width="12" height="12" viewBox="0 0 12 12"><defs><linearGradient id="bg" x1="0" y1="0" x2="0" y2="1"><stop offset="0" stop-color="#ffffff"/><stop offset="1" stop-color="#dcdcdc"/></linearGradient></defs><rect x="0.5" y="0.5" width="11" height="11" rx="1.5" fill="url(#bg)" stroke="#9a9a9a"/><rect x="2.5" y="5.5" width="7" height="1.2" fill="#3b5998"/><rect x="5.4" y="2.5" width="1.2" height="7" fill="#3b5998"/></svg>
<svg class="ab" style="left:38px;top:187px" width="16" height="14" viewBox="0 0 16 14"><path d="M1 3.5 L1 1.5 Q1 0.5 2 0.5 L6 0.5 L7.5 2.5 L13 2.5 Q14 2.5 14 3.5 L14 12 L1 12 Z" fill="#ffff8c" stroke="#9a9a7a" stroke-width="1"/><rect x="2" y="12" width="13" height="1.6" fill="#000"/><rect x="14" y="3" width="1.6" height="10.5" fill="#000"/></svg>
<div class="tr" style="left:57.2px;top:187px;letter-spacing:0.445px;-webkit-text-stroke:0.3px #fff">PηþɯwɯGɯɥGtɲ</div>
<svg class="ab" style="left:19px;top:212px" width="12" height="12" viewBox="0 0 12 12"><defs><linearGradient id="bg" x1="0" y1="0" x2="0" y2="1"><stop offset="0" stop-color="#ffffff"/><stop offset="1" stop-color="#dcdcdc"/></linearGradient></defs><rect x="0.5" y="0.5" width="11" height="11" rx="1.5" fill="url(#bg)" stroke="#9a9a9a"/><rect x="2.5" y="5.5" width="7" height="1.2" fill="#3b5998"/><rect x="5.4" y="2.5" width="1.2" height="7" fill="#3b5998"/></svg>
<svg class="ab" style="left:38px;top:209px" width="16" height="14" viewBox="0 0 16 14"><path d="M1 3.5 L1 1.5 Q1 0.5 2 0.5 L6 0.5 L7.5 2.5 L13 2.5 Q14 2.5 14 3.5 L14 12 L1 12 Z" fill="#ffff8c" stroke="#9a9a7a" stroke-width="1"/><rect x="2" y="12" width="13" height="1.6" fill="#000"/><rect x="14" y="3" width="1.6" height="10.5" fill="#000"/></svg>
<div class="tr" style="left:57.2px;top:209px;letter-spacing:0.521px;-webkit-text-stroke:0.3px #fff">OqmɯqnɲðnηGtɲ u U2S</div>
<svg class="ab" style="left:19px;top:234px" width="12" height="12" viewBox="0 0 12 12"><defs><linearGradient id="bg" x1="0" y1="0" x2="0" y2="1"><stop offset="0" stop-color="#ffffff"/><stop offset="1" stop-color="#dcdcdc"/></linearGradient></defs><rect x="0.5" y="0.5" width="11" height="11" rx="1.5" fill="url(#bg)" stroke="#9a9a9a"/><rect x="2.5" y="5.5" width="7" height="1.2" fill="#3b5998"/><rect x="5.4" y="2.5" width="1.2" height="7" fill="#3b5998"/></svg>
<svg class="ab" style="left:38px;top:231px" width="16" height="14" viewBox="0 0 16 14"><path d="M1 3.5 L1 1.5 Q1 0.5 2 0.5 L6 0.5 L7.5 2.5 L13 2.5 Q14 2.5 14 3.5 L14 12 L1 12 Z" fill="#ffff8c" stroke="#9a9a7a" stroke-width="1"/><rect x="2" y="12" width="13" height="1.6" fill="#000"/><rect x="14" y="3" width="1.6" height="10.5" fill="#000"/></svg>
<div class="tr" style="left:57.2px;top:231px;letter-spacing:1.764px;-webkit-text-stroke:0.3px #fff">9ɯɲɯutmɲtɲ</div>
<svg class="ab" style="left:19px;top:256px" width="12" height="12" viewBox="0 0 12 12"><defs><linearGradient id="bg" x1="0" y1="0" x2="0" y2="1"><stop offset="0" stop-color="#ffffff"/><stop offset="1" stop-color="#dcdcdc"/></linearGradient></defs><rect x="0.5" y="0.5" width="11" height="11" rx="1.5" fill="url(#bg)" stroke="#9a9a9a"/><rect x="2.5" y="5.5" width="7" height="1.2" fill="#3b5998"/><rect x="5.4" y="2.5" width="1.2" height="7" fill="#3b5998"/></svg>
<svg class="ab" style="left:38px;top:253px" width="16" height="14" viewBox="0 0 16 14"><path d="M1 3.5 L1 1.5 Q1 0.5 2 0.5 L6 0.5 L7.5 2.5 L13 2.5 Q14 2.5 14 3.5 L14 12 L1 12 Z" fill="#ffff8c" stroke="#9a9a7a" stroke-width="1"/><rect x="2" y="12" width="13" height="1.6" fill="#000"/><rect x="14" y="3" width="1.6" height="10.5" fill="#000"/></svg>
<div class="tr" style="left:57.2px;top:253px;letter-spacing:0.784px;-webkit-text-stroke:0.3px #fff">ZɯuɯGtlhnιþ. ηtɥɯyɯɲuɯG ψɯumɯþηþtɲ</div>
<svg class="ab" style="left:19px;top:278px" width="12" height="12" viewBox="0 0 12 12"><defs><linearGradient id="bg" x1="0" y1="0" x2="0" y2="1"><stop offset="0" stop-color="#ffffff"/><stop offset="1" stop-color="#dcdcdc"/></linearGradient></defs><rect x="0.5" y="0.5" width="11" height="11" rx="1.5" fill="url(#bg)" stroke="#9a9a9a"/><rect x="2.5" y="5.5" width="7" height="1.2" fill="#3b5998"/><rect x="5.4" y="2.5" width="1.2" height="7" fill="#3b5998"/></svg>
<svg class="ab" style="left:38px;top:275px" width="16" height="14" viewBox="0 0 16 14"><path d="M1 3.5 L1 1.5 Q1 0.5 2 0.5 L6 0.5 L7.5 2.5 L13 2.5 Q14 2.5 14 3.5 L14 12 L1 12 Z" fill="#ffff8c" stroke="#9a9a7a" stroke-width="1"/><rect x="2" y="12" width="13" height="1.6" fill="#000"/><rect x="14" y="3" width="1.6" height="10.5" fill="#000"/></svg>
<div class="tr" style="left:57.2px;top:275px;letter-spacing:0.850px;-webkit-text-stroke:0.3px #fff">uɯɲqɯynɲnιuGtɲ u ηɲnιjþGtɲ</div>
<svg class="ab" style="left:19px;top:300px" width="12" height="12" viewBox="0 0 12 12"><defs><linearGradient id="bg" x1="0" y1="0" x2="0" y2="1"><stop offset="0" stop-color="#ffffff"/><stop offset="1" stop-color="#dcdcdc"/></linearGradient></defs><rect x="0.5" y="0.5" width="11" height="11" rx="1.5" fill="url(#bg)" stroke="#9a9a9a"/><rect x="2.5" y="5.5" width="7" height="1.2" fill="#3b5998"/><rect x="5.4" y="2.5" width="1.2" height="7" fill="#3b5998"/></svg>
<svg class="ab" style="left:38px;top:297px" width="16" height="14" viewBox="0 0 16 14"><path d="M1 3.5 L1 1.5 Q1 0.5 2 0.5 L6 0.5 L7.5 2.5 L13 2.5 Q14 2.5 14 3.5 L14 12 L1 12 Z" fill="#ffff8c" stroke="#9a9a7a" stroke-width="1"/><rect x="2" y="12" width="13" height="1.6" fill="#000"/><rect x="14" y="3" width="1.6" height="10.5" fill="#000"/></svg>
<div class="tr" style="left:57.2px;top:297px;letter-spacing:1.688px;-webkit-text-stroke:0.3px #fff">StηtɥɯmnιGtɲ</div>
<svg class="ab" style="left:19px;top:322px" width="12" height="12" viewBox="0 0 12 12"><defs><linearGradient id="bg" x1="0" y1="0" x2="0" y2="1"><stop offset="0" stop-color="#ffffff"/><stop offset="1" stop-color="#dcdcdc"/></linearGradient></defs><rect x="0.5" y="0.5" width="11" height="11" rx="1.5" fill="url(#bg)" stroke="#9a9a9a"/><rect x="2.5" y="5.5" width="7" height="1.2" fill="#3b5998"/><rect x="5.4" y="2.5" width="1.2" height="7" fill="#3b5998"/></svg>
<svg class="ab" style="left:38px;top:319px" width="16" height="14" viewBox="0 0 16 14"><path d="M1 3.5 L1 1.5 Q1 0.5 2 0.5 L6 0.5 L7.5 2.5 L13 2.5 Q14 2.5 14 3.5 L14 12 L1 12 Z" fill="#ffff8c" stroke="#9a9a7a" stroke-width="1"/><rect x="2" y="12" width="13" height="1.6" fill="#000"/><rect x="14" y="3" width="1.6" height="10.5" fill="#000"/></svg>
<div class="tr" style="left:57.2px;top:319px;letter-spacing:0.846px;-webkit-text-stroke:0.3px #fff">OdɯGηɯɥ mtηtɥɯmnιGtɲ</div>
<svg class="ab" style="left:19px;top:344px" width="12" height="12" viewBox="0 0 12 12"><defs><linearGradient id="bg" x1="0" y1="0" x2="0" y2="1"><stop offset="0" stop-color="#ffffff"/><stop offset="1" stop-color="#dcdcdc"/></linearGradient></defs><rect x="0.5" y="0.5" width="11" height="11" rx="1.5" fill="url(#bg)" stroke="#9a9a9a"/><rect x="2.5" y="5.5" width="7" height="1.2" fill="#3b5998"/><rect x="5.4" y="2.5" width="1.2" height="7" fill="#3b5998"/></svg>
<svg class="ab" style="left:38px;top:341px" width="16" height="14" viewBox="0 0 16 14"><path d="M1 3.5 L1 1.5 Q1 0.5 2 0.5 L6 0.5 L7.5 2.5 L13 2.5 Q14 2.5 14 3.5 L14 12 L1 12 Z" fill="#ffff8c" stroke="#9a9a7a" stroke-width="1"/><rect x="2" y="12" width="13" height="1.6" fill="#000"/><rect x="14" y="3" width="1.6" height="10.5" fill="#000"/></svg>
<div class="tr" style="left:57.2px;top:341px;letter-spacing:0.313px;-webkit-text-stroke:0.3px #fff">UnɯgɯηɲɯGþGtɲ</div>
<svg class="ab" style="left:19px;top:366px" width="12" height="12" viewBox="0 0 12 12"><defs><linearGradient id="bg" x1="0" y1="0" x2="0" y2="1"><stop offset="0" stop-color="#ffffff"/><stop offset="1" stop-color="#dcdcdc"/></linearGradient></defs><rect x="0.5" y="0.5" width="11" height="11" rx="1.5" fill="url(#bg)" stroke="#9a9a9a"/><rect x="2.5" y="5.5" width="7" height="1.2" fill="#3b5998"/></svg>
<svg class="ab" style="left:38px;top:363px" width="16" height="14" viewBox="0 0 16 14"><path d="M1 3.5 L1 1.5 Q1 0.5 2 0.5 L6 0.5 L7.5 2.5 L13 2.5 Q14 2.5 14 3.5 L14 12 L1 12 Z" fill="#ffff8c" stroke="#9a9a7a" stroke-width="1"/><rect x="2" y="12" width="13" height="1.6" fill="#000"/><rect x="14" y="3" width="1.6" height="10.5" fill="#000"/></svg>
<div class="tr" style="left:57.2px;top:363px;letter-spacing:-0.087px;-webkit-text-stroke:0.3px #fff">ZɯuɯɥɯɲqɯjhG ɯzhuɯmɯGþGtɲ</div>
<svg class="ab" style="left:40px;top:388px" width="12" height="12" viewBox="0 0 12 12"><defs><linearGradient id="bg" x1="0" y1="0" x2="0" y2="1"><stop offset="0" stop-color="#ffffff"/><stop offset="1" stop-color="#dcdcdc"/></linearGradient></defs><rect x="0.5" y="0.5" width="11" height="11" rx="1.5" fill="url(#bg)" stroke="#9a9a9a"/><rect x="2.5" y="5.5" width="7" height="1.2" fill="#3b5998"/></svg>
<svg class="ab" style="left:59px;top:385px" width="16" height="14" viewBox="0 0 16 14"><path d="M1 3.5 L1 1.5 Q1 0.5 2 0.5 L6 0.5 L7.5 2.5 L13 2.5 Q14 2.5 14 3.5 L14 12 L1 12 Z" fill="#ffff8c" stroke="#9a9a7a" stroke-width="1"/><rect x="2" y="12" width="13" height="1.6" fill="#000"/><rect x="14" y="3" width="1.6" height="10.5" fill="#000"/></svg>
<div class="tr" style="left:79.0px;top:385px;letter-spacing:0.241px;-webkit-text-stroke:0.3px #fff">ZɯuɯɥɯɲqɯjhG GɥɯɲɯqɲnιþjnιGGtɲ</div>
<svg class="ab" style="left:80px;top:409px" width="16" height="14" viewBox="0 0 16 14"><rect x="0" y="0" width="16" height="14" fill="#000"/><rect x="1" y="0" width="14" height="3" fill="#0000ff"/><rect x="1" y="3" width="14" height="10" fill="#c8c8c8"/><rect x="6" y="5" width="8" height="3" fill="#fff" stroke="#000" stroke-width="0.8"/><rect x="6" y="9" width="8" height="3" fill="#fff" stroke="#000" stroke-width="0.8"/><rect x="2" y="5" width="3" height="1" fill="#000"/><rect x="2" y="9" width="3" height="1" fill="#000"/></svg>
<div class="tr" style="left:100.0px;top:407px;letter-spacing:0.981px;-webkit-text-stroke:0.3px #fff">Фɯumɯþηþtɲh ηtɥɯyɯɲnιu</div>
<div class="ab" style="left:98px;top:426px;width:288px;height:22px;background:#eeeeee"></div>
<svg class="ab" style="left:80px;top:430px" width="16" height="16" viewBox="0 0 16 16"><circle cx="3.5" cy="2.5" r="2" fill="#fff" stroke="#000"/><rect x="1" y="5" width="5" height="5" fill="#00e0e0" stroke="#000" stroke-width="0.8"/><rect x="2" y="10" width="1" height="5" fill="#000"/><rect x="4" y="10" width="1" height="5" fill="#000"/><rect x="9" y="0.5" width="6.5" height="15" rx="2" fill="#fff" stroke="#000" stroke-width="1.2"/><path d="M9.5 3h5.5M9.5 5h5.5M9.5 7h5.5M9.5 9h5.5M9.5 11h5.5M9.5 13h5.5" stroke="#707070" stroke-width="1"/></svg>
<div class="tr" style="left:100.0px;top:429px;letter-spacing:0.200px;-webkit-text-stroke:0.3px #eeeeee">ZɯuɯɥɯɲqɯjhG GɥɯɲɯqɲnιþjnιGGtɲ</div>
<svg class="ab" style="left:80px;top:452px" width="16" height="16" viewBox="0 0 16 16"><path d="M1.5 2 L1.5 12.5 L12 12.5 Z" fill="#00d8d8" stroke="#000" stroke-width="1"/><path d="M4 8 L4 10.5 L6.5 10.5Z" fill="#fff" stroke="#000" stroke-width="0.6"/><rect x="0" y="13" width="15" height="3" fill="#fff" stroke="#000" stroke-width="1"/><path d="M3 13v1.5M6 13v1.5M9 13v1.5M12 13v1.5" stroke="#000" stroke-width="0.8"/><path d="M7 10 L13.5 2 L15.5 3.5 L9 11.5 Z" fill="#f0d000" stroke="#000" stroke-width="0.9"/><path d="M7 10 L6.5 12 L9 11.5Z" fill="#000"/></svg>
<div class="tr" style="left:100.0px;top:451px;letter-spacing:0.513px;-webkit-text-stroke:0.3px #fff">Oqmɯqnɲðnηh Gɥɯɲɯqɲynη hɯzytmynιþjnιGGtɲ</div>
<svg class="ab" style="left:61px;top:476px" width="12" height="12" viewBox="0 0 12 12"><defs><linearGradient id="bg" x1="0" y1="0" x2="0" y2="1"><stop offset="0" stop-color="#ffffff"/><stop offset="1" stop-color="#dcdcdc"/></linearGradient></defs><rect x="0.5" y="0.5" width="11" height="11" rx="1.5" fill="url(#bg)" stroke="#9a9a9a"/><rect x="2.5" y="5.5" width="7" height="1.2" fill="#3b5998"/><rect x="5.4" y="2.5" width="1.2" height="7" fill="#3b5998"/></svg>
<svg class="ab" style="left:80px;top:473px" width="16" height="14" viewBox="0 0 16 14"><path d="M1 3.5 L1 1.5 Q1 0.5 2 0.5 L6 0.5 L7.5 2.5 L13 2.5 Q14 2.5 14 3.5 L14 12 L1 12 Z" fill="#ffff8c" stroke="#9a9a7a" stroke-width="1"/><rect x="2" y="12" width="13" height="1.6" fill="#000"/><rect x="14" y="3" width="1.6" height="10.5" fill="#000"/></svg>
<div class="tr" style="left:100.0px;top:473px;letter-spacing:0.309px;-webkit-text-stroke:0.3px #fff">ZɯuɯɥɯɲqɯjhG GɥɯɲɯqɲnιþjnιGGtɲh ɲGηlɯjGnιuGtɲ</div>
<svg class="ab" style="left:61px;top:498px" width="12" height="12" viewBox="0 0 12 12"><defs><linearGradient id="bg" x1="0" y1="0" x2="0" y2="1"><stop offset="0" stop-color="#ffffff"/><stop offset="1" stop-color="#dcdcdc"/></linearGradient></defs><rect x="0.5" y="0.5" width="11" height="11" rx="1.5" fill="url(#bg)" stroke="#9a9a9a"/><rect x="2.5" y="5.5" width="7" height="1.2" fill="#3b5998"/><rect x="5.4" y="2.5" width="1.2" height="7" fill="#3b5998"/></svg>
<svg class="ab" style="left:80px;top:495px" width="16" height="14" viewBox="0 0 16 14"><path d="M1 3.5 L1 1.5 Q1 0.5 2 0.5 L6 0.5 L7.5 2.5 L13 2.5 Q14 2.5 14 3.5 L14 12 L1 12 Z" fill="#ffff8c" stroke="#9a9a7a" stroke-width="1"/><rect x="2" y="12" width="13" height="1.6" fill="#000"/><rect x="14" y="3" width="1.6" height="10.5" fill="#000"/></svg>
<div class="tr" style="left:100.0px;top:495px;letter-spacing:0.322px;-webkit-text-stroke:0.3px #fff">ZɯuɯɥɯɲqɯjhG GɥɯɲɯqɲnιþjnιGGtɲh umnιqnιuGtɲ</div>
<svg class="ab" style="left:80px;top:519px" width="14" height="13" viewBox="0 0 14 13"><rect x="0" y="0" width="14" height="13" fill="#000"/><rect x="0" y="0" width="14" height="2" fill="#000080"/><rect x="1" y="3" width="12" height="9" fill="#808080"/><rect x="1.5" y="3.5" width="3" height="2" fill="#fff"/><rect x="5.5" y="3.5" width="3" height="2" fill="#00e8f0"/><rect x="9.5" y="3.5" width="3" height="2" fill="#fff"/><rect x="1.5" y="6.5" width="3" height="2" fill="#fff"/><rect x="5.5" y="6.5" width="3" height="2" fill="#00e8f0"/><rect x="9.5" y="6.5" width="3" height="2" fill="#fff"/><rect x="1.5" y="9.5" width="3" height="2" fill="#fff"/><rect x="5.5" y="9.5" width="3" height="2" fill="#00e8f0"/><rect x="9.5" y="9.5" width="3" height="2" fill="#fff"/></svg>
<div class="tr" style="left:100.0px;top:517px;letter-spacing:2.456px;-webkit-text-stroke:0.3px #fff">Stumtɲ</div>
<svg class="ab" style="left:40px;top:542px" width="12" height="12" viewBox="0 0 12 12"><defs><linearGradient id="bg" x1="0" y1="0" x2="0" y2="1"><stop offset="0" stop-color="#ffffff"/><stop offset="1" stop-color="#dcdcdc"/></linearGradient></defs><rect x="0.5" y="0.5" width="11" height="11" rx="1.5" fill="url(#bg)" stroke="#9a9a9a"/><rect x="2.5" y="5.5" width="7" height="1.2" fill="#3b5998"/><rect x="5.4" y="2.5" width="1.2" height="7" fill="#3b5998"/></svg>
<svg class="ab" style="left:59px;top:539px" width="16" height="14" viewBox="0 0 16 14"><path d="M1 3.5 L1 1.5 Q1 0.5 2 0.5 L6 0.5 L7.5 2.5 L13 2.5 Q14 2.5 14 3.5 L14 12 L1 12 Z" fill="#ffff8c" stroke="#9a9a7a" stroke-width="1"/><rect x="2" y="12" width="13" height="1.6" fill="#000"/><rect x="14" y="3" width="1.6" height="10.5" fill="#000"/></svg>
<div class="tr" style="left:79.0px;top:539px;letter-spacing:1.203px;-webkit-text-stroke:0.3px #fff">Swtlnι suɯGunιzGtɲ</div>
<svg class="ab" style="left:40px;top:564px" width="12" height="12" viewBox="0 0 12 12"><defs><linearGradient id="bg" x1="0" y1="0" x2="0" y2="1"><stop offset="0" stop-color="#ffffff"/><stop offset="1" stop-color="#dcdcdc"/></linearGradient></defs><rect x="0.5" y="0.5" width="11" height="11" rx="1.5" fill="url(#bg)" stroke="#9a9a9a"/><rect x="2.5" y="5.5" width="7" height="1.2" fill="#3b5998"/><rect x="5.4" y="2.5" width="1.2" height="7" fill="#3b5998"/></svg>
<svg class="ab" style="left:59px;top:561px" width="16" height="14" viewBox="0 0 16 14"><path d="M1 3.5 L1 1.5 Q1 0.5 2 0.5 L6 0.5 L7.5 2.5 L13 2.5 Q14 2.5 14 3.5 L14 12 L1 12 Z" fill="#ffff8c" stroke="#9a9a7a" stroke-width="1"/><rect x="2" y="12" width="13" height="1.6" fill="#000"/><rect x="14" y="3" width="1.6" height="10.5" fill="#000"/></svg>
<div class="tr" style="left:79.0px;top:561px;letter-spacing:0.388px;-webkit-text-stroke:0.3px #fff">ZɯuɯɥɯɲqɯjhG qnɲðhþGtɲ</div>
<svg class="ab" style="left:40px;top:586px" width="12" height="12" viewBox="0 0 12 12"><defs><linearGradient id="bg" x1="0" y1="0" x2="0" y2="1"><stop offset="0" stop-color="#ffffff"/><stop offset="1" stop-color="#dcdcdc"/></linearGradient></defs><rect x="0.5" y="0.5" width="11" height="11" rx="1.5" fill="url(#bg)" stroke="#9a9a9a"/><rect x="2.5" y="5.5" width="7" height="1.2" fill="#3b5998"/><rect x="5.4" y="2.5" width="1.2" height="7" fill="#3b5998"/></svg>
<svg class="ab" style="left:59px;top:583px" width="16" height="14" viewBox="0 0 16 14"><path d="M1 3.5 L1 1.5 Q1 0.5 2 0.5 L6 0.5 L7.5 2.5 L13 2.5 Q14 2.5 14 3.5 L14 12 L1 12 Z" fill="#ffff8c" stroke="#9a9a7a" stroke-width="1"/><rect x="2" y="12" width="13" height="1.6" fill="#000"/><rect x="14" y="3" width="1.6" height="10.5" fill="#000"/></svg>
<div class="tr" style="left:79.0px;top:583px;letter-spacing:0.893px;-webkit-text-stroke:0.3px #fff">UhɯgnιuGtɲh ηtɥɯyɯɲnιu</div>
<svg class="ab" style="left:40px;top:608px" width="12" height="12" viewBox="0 0 12 12"><defs><linearGradient id="bg" x1="0" y1="0" x2="0" y2="1"><stop offset="0" stop-color="#ffffff"/><stop offset="1" stop-color="#dcdcdc"/></linearGradient></defs><rect x="0.5" y="0.5" width="11" height="11" rx="1.5" fill="url(#bg)" stroke="#9a9a9a"/><rect x="2.5" y="5.5" width="7" height="1.2" fill="#3b5998"/><rect x="5.4" y="2.5" width="1.2" height="7" fill="#3b5998"/></svg>
<svg class="ab" style="left:59px;top:605px" width="16" height="14" viewBox="0 0 16 14"><path d="M1 3.5 L1 1.5 Q1 0.5 2 0.5 L6 0.5 L7.5 2.5 L13 2.5 Q14 2.5 14 3.5 L14 12 L1 12 Z" fill="#ffff8c" stroke="#9a9a7a" stroke-width="1"/><rect x="2" y="12" width="13" height="1.6" fill="#000"/><rect x="14" y="3" width="1.6" height="10.5" fill="#000"/></svg>
<div class="tr" style="left:79.0px;top:605px;letter-spacing:1.186px;-webkit-text-stroke:0.3px #fff">SyjɯlGtɲh Gtɲunιðnιu</div>
<svg class="ab" style="left:40px;top:630px" width="12" height="12" viewBox="0 0 12 12"><defs><linearGradient id="bg" x1="0" y1="0" x2="0" y2="1"><stop offset="0" stop-color="#ffffff"/><stop offset="1" stop-color="#dcdcdc"/></linearGradient></defs><rect x="0.5" y="0.5" width="11" height="11" rx="1.5" fill="url(#bg)" stroke="#9a9a9a"/><rect x="2.5" y="5.5" width="7" height="1.2" fill="#3b5998"/><rect x="5.4" y="2.5" width="1.2" height="7" fill="#3b5998"/></svg>
<svg class="ab" style="left:59px;top:627px" width="16" height="14" viewBox="0 0 16 14"><path d="M1 3.5 L1 1.5 Q1 0.5 2 0.5 L6 0.5 L7.5 2.5 L13 2.5 Q14 2.5 14 3.5 L14 12 L1 12 Z" fill="#ffff8c" stroke="#9a9a7a" stroke-width="1"/><rect x="2" y="12" width="13" height="1.6" fill="#000"/><rect x="14" y="3" width="1.6" height="10.5" fill="#000"/></svg>
<div class="tr" style="left:79.0px;top:627px;letter-spacing:0.104px;-webkit-text-stroke:0.3px #fff">Uɲhuhyɯgnιu/QGgnιu</div>
<svg class="ab" style="left:40px;top:652px" width="12" height="12" viewBox="0 0 12 12"><defs><linearGradient id="bg" x1="0" y1="0" x2="0" y2="1"><stop offset="0" stop-color="#ffffff"/><stop offset="1" stop-color="#dcdcdc"/></linearGradient></defs><rect x="0.5" y="0.5" width="11" height="11" rx="1.5" fill="url(#bg)" stroke="#9a9a9a"/><rect x="2.5" y="5.5" width="7" height="1.2" fill="#3b5998"/><rect x="5.4" y="2.5" width="1.2" height="7" fill="#3b5998"/></svg>
<svg class="ab" style="left:59px;top:649px" width="16" height="14" viewBox="0 0 16 14"><path d="M1 3.5 L1 1.5 Q1 0.5 2 0.5 L6 0.5 L7.5 2.5 L13 2.5 Q14 2.5 14 3.5 L14 12 L1 12 Z" fill="#ffff8c" stroke="#9a9a7a" stroke-width="1"/><rect x="2" y="12" width="13" height="1.6" fill="#000"/><rect x="14" y="3" width="1.6" height="10.5" fill="#000"/></svg>
<div class="tr" style="left:79.0px;top:649px;letter-spacing:1.031px;-webkit-text-stroke:0.3px #fff">SyjɯlGtɲh umnιqnιu</div>
<svg class="ab" style="left:40px;top:674px" width="12" height="12" viewBox="0 0 12 12"><defs><linearGradient id="bg" x1="0" y1="0" x2="0" y2="1"><stop offset="0" stop-color="#ffffff"/><stop offset="1" stop-color="#dcdcdc"/></linearGradient></defs><rect x="0.5" y="0.5" width="11" height="11" rx="1.5" fill="url(#bg)" stroke="#9a9a9a"/><rect x="2.5" y="5.5" width="7" height="1.2" fill="#3b5998"/><rect x="5.4" y="2.5" width="1.2" height="7" fill="#3b5998"/></svg>
<svg class="ab" style="left:59px;top:671px" width="16" height="14" viewBox="0 0 16 14"><path d="M1 3.5 L1 1.5 Q1 0.5 2 0.5 L6 0.5 L7.5 2.5 L13 2.5 Q14 2.5 14 3.5 L14 12 L1 12 Z" fill="#ffff8c" stroke="#9a9a7a" stroke-width="1"/><rect x="2" y="12" width="13" height="1.6" fill="#000"/><rect x="14" y="3" width="1.6" height="10.5" fill="#000"/></svg>
<div class="tr" style="left:79.0px;top:671px;letter-spacing:0.490px;-webkit-text-stroke:0.3px #fff">hɲɯηɯɲsnιþjnιGGtɲh wɯmunιþjnιG</div>
<div class="ab" style="left:519px;top:335px;width:1076px;height:523px;background:#b9d1ea;border:1px solid #000;border-radius:5px 5px 0 0;box-shadow:inset 0 -1px 0 #20c0f0, inset -1px 0 0 #20c0f0"></div>
<div class="ab" style="left:520px;top:336px;width:1074px;height:37px;background:linear-gradient(#eef4fb 0 1px,#93adcc 2px,#b9d2ea 36px,#cfe0f2 37px);border-radius:4px 4px 0 0"></div>
<svg class="ab" style="left:530px;top:348px" width="20" height="20" viewBox="0 0 20 20"><rect x="0" y="0" width="20" height="20" rx="3" fill="#5b5b5b"/><path d="M6.5 3.5 L11.5 3.5 L11 6 L15.5 7 L12.8 18 L8.5 18 L9 15.8 L4.3 15 Z" fill="#f4f4f4"/><path d="M9.8 8 L11.8 8 L10.2 15 L8.2 15 Z" fill="#5b5b5b"/></svg>
<div class="ttl" style="left:555px;top:350px;color:#000;letter-spacing:0.347px">R1 hɯzyɯnuɯu uɥɯɲɯqɲnιþjnιu</div>
<div class="ab" style="left:1455px;top:346px;width:41px;height:23px;border:1px solid #6f7f96;border-radius:3px;background:linear-gradient(#c6d8ee 0%,#b6cbe6 45%,#9cb5d6 50%,#a6bfdd 100%)"></div>
<div class="ab" style="left:1467px;top:356px;width:17px;height:6px;background:linear-gradient(#fff,#e4e4e4);border:1px solid #4d5566;border-radius:2px"></div>
<div class="ab" style="left:1499px;top:346px;width:41px;height:23px;border:1px solid #6f7f96;border-radius:3px;background:linear-gradient(#c6d8ee 0%,#b6cbe6 45%,#9cb5d6 50%,#a6bfdd 100%)"></div>
<div class="ab" style="left:1512px;top:351px;width:15px;height:13px;background:transparent;border:4px solid #f5f5f5;outline:1px solid #4d5566;box-shadow:inset 0 0 0 1px #4d5566;border-radius:1px"></div>
<div class="ab" style="left:1543px;top:346px;width:42px;height:23px;border:1px solid #6e2a20;border-radius:3px;background:linear-gradient(#e8a898 0%,#d0735f 45%,#c04a30 50%,#c4533a 100%)"></div>
<svg class="ab" style="left:1555px;top:349px" width="18" height="16" viewBox="0 0 18 16"><path d="M3.5 3 L14.5 13 M14.5 3 L3.5 13" stroke="#4d5566" stroke-width="5.5" stroke-linecap="round"/><path d="M3.5 3 L14.5 13 M14.5 3 L3.5 13" stroke="#f2f2f2" stroke-width="3.6" stroke-linecap="round"/></svg>
<div class="ab" style="left:528px;top:373px;width:1058px;height:476px;background:#fff"></div>
<div class="ab" style="left:528px;top:373px;width:1043px;height:1px;background:#000"></div>
<div class="ab" style="left:528px;top:774px;width:1042px;height:20px;background:#0078d7"></div>
<div class="code" style="left:528px;top:376px;color:#000">ACCOUNTING{NAME=R1;CAPTION="Zhuuɯɥɯu uuɯgnɲηh hɯzyɯnnιu";</div>
<div class="code" style="left:528px;top:396px;color:#000">MAINFOLDER=ALLAGREEMENTS;CURRENCY=0;REMAINDER=1;</div>
<div class="code" style="left:528px;top:416px;color:#000">DESCRIPTION="Zhuuɯɥɯu uuɯgnɲηh hɯzyɯnnιu";</div>
<div class="code" style="left:528px;top:436px;color:#000">FACTHEADER=" Uuuɯþhy   9ɯjuɯuɯqɲh N           Gnιuɯɲ  Uɲd.";</div>
<div class="code" style="left:528px;top:456px;color:#000">   OPERATION{NAME=AGR;CAPTION="Gnιuɯɲh mɲɯuɯηɲnιu";};</div>
<div class="code" style="left:528px;top:476px;color:#000">   OPERATION{NAME=DBT;CAPTION="Gnιuɯɲh uɯɲnιu";};</div>
<div class="code" style="left:528px;top:496px;color:#000">   OPERATION{NAME=RTP;CAPTION="Gnιuɯɲh uɯɲnιu mnɥnuutɲh hɯzyhu";};</div>
<div class="code" style="left:528px;top:516px;color:#000">   OPERATION{NAME=RPG;CAPTION="Gnιuɯɲh uɯɲnιu yɯɲsɯydɯɲh hɯzyhu";};</div>
<div class="code" style="left:528px;top:536px;color:#000">   OPERATION{NAME=ADV;CAPTION="uɯuhuɯydɯɲ";};</div>
<div class="code" style="left:528px;top:556px;color:#000">   OPERATION{NAME=CAP;CAPTION="Snɥnuutɲh ɥɯwhmɯlɯgnιu";};</div>
<div class="code" style="left:528px;top:576px;color:#000">   OPERATION{NAME=CP3;CAPTION="Uɯjɲ qnιuɯɲh mnιjdh ɥɯwhmɯlɯgnιu ";};</div>
<div class="code" style="left:528px;top:596px;color:#000">   OPERATION{NAME=CPT;CAPTION="Snɥnuɯjhu mnιjdh ɥɯwhmɯlɯgnιu";};</div>
<div class="code" style="left:528px;top:616px;color:#000">   OPERATION{NAME=CPF;CAPTION="PSZG mnɥnuɯqnιuɯɲh ɥɯwhmɯlɯgnιu";};</div>
<div class="code" style="left:528px;top:636px;color:#000">   OPERATION{NAME=CPL;CAPTION="dɯuɥtmɯug qnιuɯɲh mnɥnuh(yuɯu) ɥɯwhmɯlɯgnιu";};</div>
<div class="code" style="left:528px;top:656px;color:#000">   OPERATION{NAME=CPH;CAPTION="2oqmɯqnɲðyɯð uɯuh mnɥnuh ɥɯwhmɯlɯgnιu";};</div>
<div class="code" style="left:528px;top:676px;color:#000">   OPERATION{NAME=LET;CAPTION="Gnιuɯɲh «qhgnιu»";};</div>
<div class="code" style="left:528px;top:696px;color:#000">   OPERATION{NAME=BRK;CAPTION="Dɯηɯɲtguɯu mnιjd wɯjuɯuɯqɲh qnιuɯɲhg";};</div>
<div class="code" style="left:528px;top:716px;color:#000">   OPERATION{NAME=BRP;CAPTION="Dɯηɯɲtgnιuhg ɥɯuhuɯy yd. mnɥnuutɲh ytɲɯηɯɲs";};</div>
<div class="code" style="left:528px;top:736px;color:#000">   OPERATION{NAME=SEL;CAPTION="Uɲdtþηþh yɯdɯnþ";};</div>
<div class="code" style="left:528px;top:756px;color:#000">   OPERATION{NAME=CLO;CAPTION="Uɲdtþηþh ytɲɯηɯuɯɥɯɲqnιu";};</div>
<div class="code" style="left:528px;top:776px;color:#fff">   OPERATION{NAME=CLN;CAPTION="Uɲdtþηþh ytɲɯηɯuɯɥɯɲqnιu";};</div>
<div class="code" style="left:528px;top:796px;color:#000">   OPERATION{NAME=RWA;CAPTION="9ɯjuɯuɯqɲh ytɲɯsuɯɥtɲwnιu";};</div>
<div class="code" style="left:528px;top:816px;color:#000">   OPERATION{NAME=RWD;CAPTION="9ɯjuɯuɯqɲh ytɲɯsuɯɥtɲwnιu";};</div>
<div class="ab" style="left:1571px;top:374px;width:15px;height:149px;background:#f0f0f0"></div>
<div class="ab" style="left:1571px;top:813px;width:15px;height:36px;background:#f0f0f0"></div>
<svg class="ab" style="left:1573px;top:380px" width="11" height="8" viewBox="0 0 11 8"><path d="M1 7 L5.5 1.5 L10 7Z" fill="#868686"/></svg>
<div class="ab" style="left:1576px;top:394px;width:5px;height:129px;background:#858585;border-radius:3px"></div>
<svg class="ab" style="left:1573px;top:819px" width="11" height="8" viewBox="0 0 11 8"><path d="M1 1 L5.5 6.5 L10 1Z" fill="#868686"/></svg>
<div class="ab" style="left:528px;top:834px;width:106px;height:15px;background:#f0f0f0"></div>
<div class="ab" style="left:549px;top:841px;width:85px;height:1px;background:#858585"></div>
<div class="ab" style="left:1549px;top:834px;width:37px;height:15px;background:#f0f0f0"></div>
<div class="ab" style="left:699px;top:448px;width:46px;height:391px;border:5px solid #ff0000;box-shadow:2px 2px 3px rgba(0,0,0,0.35), inset 2px 2px 3px rgba(0,0,0,0.25)"></div>
<svg class="ab" style="left:385px;top:412px" width="100" height="45" viewBox="385 412 100 45"><defs><filter id="sh" x="-20%" y="-40%" width="150%" height="190%"><feGaussianBlur stdDeviation="1.3"/></filter></defs><path d="M394.2 436.4 L427.6 420.2 L428.9 429 L473.6 423.1 L474.9 428 L430.2 434.8 L430.8 443.2 Z" fill="#2c4b4b" opacity="0.6" transform="translate(2.5 2.5)" filter="url(#sh)"/><path d="M394.2 436.4 L427.6 420.2 L428.9 429 L473.6 423.1 L474.9 428 L430.2 434.8 L430.8 443.2 Z" fill="#ff0000"/></svg>
</body></html>
